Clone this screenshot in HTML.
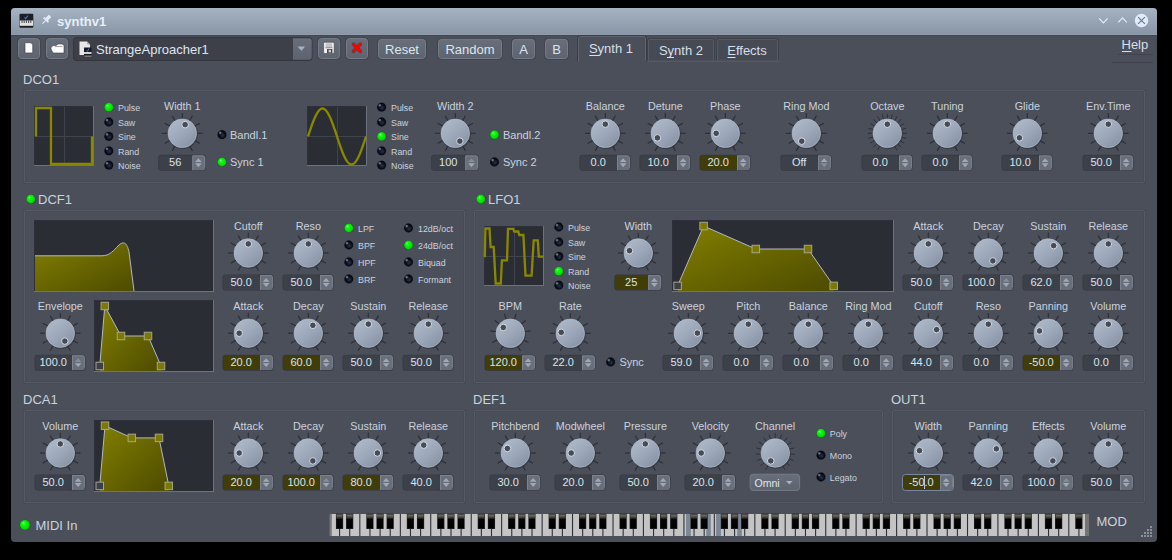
<!DOCTYPE html><html><head><meta charset="utf-8"><style>html,body{margin:0;padding:0;background:#000;width:1172px;height:560px;overflow:hidden}</style></head><body><svg width="1172" height="560" viewBox="0 0 1172 560" style="display:block"><defs>
<linearGradient id="kg" x1="0.15" y1="0.1" x2="0.85" y2="0.95"><stop offset="0" stop-color="#acb7c8"/><stop offset="0.5" stop-color="#9ca7b9"/><stop offset="1" stop-color="#8792a5"/></linearGradient>
<radialGradient id="lon" cx="0.5" cy="0.5" r="0.5" fx="0.32" fy="0.28"><stop offset="0" stop-color="#90ff90"/><stop offset="0.3" stop-color="#18fa18"/><stop offset="0.85" stop-color="#00e000"/><stop offset="1" stop-color="#00b800"/></radialGradient>
<radialGradient id="loff" cx="0.5" cy="0.5" r="0.5" fx="0.6" fy="0.62"><stop offset="0" stop-color="#23344f"/><stop offset="0.6" stop-color="#0c1220"/><stop offset="1" stop-color="#020306"/></radialGradient><radialGradient id="lhi" cx="0.5" cy="0.5" r="0.5"><stop offset="0" stop-color="#a0a4ac" stop-opacity="0.9"/><stop offset="1" stop-color="#a0a4ac" stop-opacity="0"/></radialGradient>
<linearGradient id="tb" x1="0" y1="0" x2="0" y2="1"><stop offset="0" stop-color="#a6b3c2"/><stop offset="1" stop-color="#8895a5"/></linearGradient>
<linearGradient id="bg" x1="0" y1="0" x2="0" y2="1"><stop offset="0" stop-color="#686e7a"/><stop offset="1" stop-color="#5d636f"/></linearGradient>
<linearGradient id="olv" x1="0" y1="0" x2="1" y2="1"><stop offset="0" stop-color="#827f00"/><stop offset="1" stop-color="#4d4b00"/></linearGradient>
<linearGradient id="bk" x1="0" y1="0" x2="0" y2="1"><stop offset="0" stop-color="#3a3a38"/><stop offset="0.1" stop-color="#6a665e"/><stop offset="0.22" stop-color="#4a4844"/><stop offset="0.38" stop-color="#050505"/><stop offset="1" stop-color="#000"/></linearGradient></defs><g font-family='"Liberation Sans", sans-serif'><rect width="1172" height="560" fill="#000"/><rect x="11" y="8" width="1146" height="534" rx="4" fill="#4b4f5a"/><path d="M11,35 V12 Q11,8 15,8 H1153 Q1157,8 1157,12 V35 Z" fill="url(#tb)"/><rect x="11" y="34" width="1146" height="1" fill="#919dad"/><rect x="11" y="35" width="1146" height="1" fill="#42464f"/><text x="57" y="26" font-size="13" text-anchor="start" fill="#e6eef8" font-weight="bold" >synthv1</text><rect x="19.5" y="13.7" width="13.8" height="14" rx="1" fill="#1e1f24"/><rect x="19.8" y="20.5" width="13.2" height="5.3" fill="#e2e2e2"/><path d="M22,20.5 V23 M24.2,20.5 V23 M26.4,20.5 V23 M28.6,20.5 V23 M30.8,20.5 V23" stroke="#333" stroke-width="0.9"/><path d="M24.5,17.4 L25.8,18.8 L27.8,15.6" stroke="#3f6dc0" stroke-width="1.2" fill="none"/><g transform="rotate(45 46 20)" fill="#e0ecfa"><rect x="44.3" y="14.2" width="3.4" height="5" rx="0.6"/><rect x="42.6" y="19" width="6.8" height="1.8" rx="0.5"/><rect x="45.5" y="20.5" width="1" height="4.6"/></g><path d="M1099.1,18.4 L1103.4,22.9 L1107.7,18.4" stroke="#e0ecfa" stroke-width="1.2" fill="none"/><path d="M1118.3,22.3 L1122.5,17.9 L1126.8,22.3" stroke="#e0ecfa" stroke-width="1.2" fill="none"/><circle cx="1141.5" cy="20.5" r="6.7" fill="#dfeafa"/><path d="M1138.1,17.1 L1144.9,23.9 M1144.9,17.1 L1138.1,23.9" stroke="#6b7889" stroke-width="1.1"/><rect x="17.5" y="37.5" width="23" height="22" rx="3.5" fill="#3a3d45"/><rect x="18.5" y="38.5" width="21" height="20" rx="3" fill="url(#bg)" stroke="#767c87" stroke-width="1"/><path d="M25,42.7 H31 L32.7,44.4 V52.9 H25 Z" fill="#ffffff" stroke="#3a3d45" stroke-width="0.6"/><path d="M30.6,42.8 L32.6,44.8" stroke="#777" stroke-width="0.8"/><rect x="45.5" y="37.5" width="23" height="22" rx="3.5" fill="#3a3d45"/><rect x="46.5" y="38.5" width="21" height="20" rx="3" fill="url(#bg)" stroke="#767c87" stroke-width="1"/><path d="M51,47.5 L53,45.6 H56 L58,44 H62 L64,45 V53 H53 L51,49 Z" fill="#ffffff" stroke="#3a3d45" stroke-width="0.6"/><path d="M55,46.6 H62.5" stroke="#888" stroke-width="0.8"/><rect x="73" y="37" width="239.5" height="24" rx="4" fill="#33363d"/><rect x="74" y="38" width="237.5" height="22" rx="3" fill="#3d4049"/><text x="96" y="54" font-size="13" text-anchor="start" fill="#dde6f0" font-weight="normal" >StrangeAproacher1</text><path d="M79.5,41.5 H87 L90,44.5 V55 H79.5 Z" fill="#e8e8e8"/><path d="M87,41.5 V44.5 H90" fill="#b0b0b0"/><rect x="84" y="47.5" width="7.5" height="8" fill="#1a1a1e"/><rect x="84" y="52" width="7.5" height="2" fill="#d0d0d0"/><rect x="84.5" y="55.5" width="7" height="1.5" fill="#777"/><path d="M86.5,50.5 L87.5,51.5 L89,48.5" stroke="#4a7ad0" stroke-width="0.9" fill="none"/><path d="M293,38.2 H309 Q311.7,38.2 311.7,41 V57 Q311.7,59.7 309,59.7 H293 Z" fill="url(#bg)"/><path d="M297.6,46.5 H305.2 L301.4,50.7 Z" fill="#a9b2c0"/><rect x="317.5" y="37.5" width="23" height="22" rx="3.5" fill="#3a3d45"/><rect x="318.5" y="38.5" width="21" height="20" rx="3" fill="url(#bg)" stroke="#767c87" stroke-width="1"/><rect x="323.6" y="42.2" width="10.6" height="11.3" rx="1.2" fill="#f4f4f4" stroke="#3a3d45" stroke-width="0.6"/><rect x="325.6" y="43.2" width="6.6" height="4.6" fill="#c4c4c4"/><path d="M325.3,47.8 H332.5" stroke="#555" stroke-width="0.6"/><rect x="327" y="49" width="5.4" height="4" fill="#4a4a4a"/><rect x="328.6" y="49.8" width="2.4" height="2.6" fill="#d0d0d0"/><rect x="345.5" y="37.5" width="23" height="22" rx="3.5" fill="#3a3d45"/><rect x="346.5" y="38.5" width="21" height="20" rx="3" fill="url(#bg)" stroke="#767c87" stroke-width="1"/><path d="M353.5,44.2 L360.3,51.3 M360.3,44.2 L353.5,51.3" stroke="#2a2020" stroke-width="3.6" stroke-linecap="round" opacity="0.5"/><path d="M353.5,44.2 L360.3,51.3 M360.3,44.2 L353.5,51.3" stroke="#ff0000" stroke-width="2.5" stroke-linecap="round"/><rect x="377.5" y="38.3" width="49" height="21.200000000000003" rx="3.5" fill="#3a3d45"/><rect x="378.5" y="39.3" width="47" height="19.200000000000003" rx="3" fill="url(#bg)" stroke="#767c87" stroke-width="1"/><text x="402.0" y="53.8" font-size="13" text-anchor="middle" fill="#dde6f0" font-weight="normal" >Reset</text><rect x="437.5" y="38.3" width="65" height="21.200000000000003" rx="3.5" fill="#3a3d45"/><rect x="438.5" y="39.3" width="63" height="19.200000000000003" rx="3" fill="url(#bg)" stroke="#767c87" stroke-width="1"/><text x="470.0" y="53.8" font-size="13" text-anchor="middle" fill="#dde6f0" font-weight="normal" >Random</text><rect x="511.5" y="38.3" width="24" height="21.200000000000003" rx="3.5" fill="#3a3d45"/><rect x="512.5" y="39.3" width="22" height="19.200000000000003" rx="3" fill="url(#bg)" stroke="#767c87" stroke-width="1"/><text x="523.5" y="53.8" font-size="13" text-anchor="middle" fill="#dde6f0" font-weight="normal" >A</text><rect x="544.5" y="38.3" width="24" height="21.200000000000003" rx="3.5" fill="#3a3d45"/><rect x="545.5" y="39.3" width="22" height="19.200000000000003" rx="3" fill="url(#bg)" stroke="#767c87" stroke-width="1"/><text x="556.5" y="53.8" font-size="13" text-anchor="middle" fill="#dde6f0" font-weight="normal" >B</text><rect x="646" y="60.5" width="133" height="1" fill="#5f6470"/><path d="M647.5,60.5 V40.5 Q647.5,38.5 649.5,38.5 H712.5 Q714.5,38.5 714.5,40.5 V60.5" fill="#464a54" stroke="#3d4049" stroke-width="1"/><path d="M648.5,60.5 V41 Q648.5,39.5 650,39.5 H712 Q713.5,39.5 713.5,41 V60.5" fill="none" stroke="#565a65" stroke-width="1"/><path d="M716.5,60.5 V40.5 Q716.5,38.5 718.5,38.5 H776.5 Q778.5,38.5 778.5,40.5 V60.5" fill="#464a54" stroke="#3d4049" stroke-width="1"/><path d="M717.5,60.5 V41 Q717.5,39.5 719,39.5 H776 Q777.5,39.5 777.5,41 V60.5" fill="none" stroke="#565a65" stroke-width="1"/><path d="M577.5,62 V38.5 Q577.5,35.5 580.5,35.5 H643.5 Q646.5,35.5 646.5,38.5 V62" fill="#4b4f5a" stroke="#3a3d46" stroke-width="1"/><path d="M578.5,62 V39 Q578.5,36.5 581,36.5 H643 Q645.5,36.5 645.5,39 V61" fill="none" stroke="#5e626d" stroke-width="1"/><text x="611" y="53" font-size="13" text-anchor="middle" fill="#d6dfea" font-weight="normal" >Synth 1</text><rect x="589.3" y="55" width="9" height="1" fill="#d6dfea"/><text x="681" y="54.5" font-size="13" text-anchor="middle" fill="#d6dfea" font-weight="normal" >Synth 2</text><rect x="667" y="57" width="7" height="1" fill="#d6dfea"/><text x="747" y="54.5" font-size="13" text-anchor="middle" fill="#d6dfea" font-weight="normal" >Effects</text><rect x="727.5" y="57" width="8" height="1" fill="#d6dfea"/><text x="1121.5" y="49" font-size="13" text-anchor="start" fill="#d6dfea" font-weight="normal" >Help</text><rect x="1122" y="51" width="9.5" height="1" fill="#d6dfea"/><rect x="1118" y="54" width="35" height="1" fill="#40434c"/><rect x="1112" y="62" width="41" height="1" fill="#40434c"/><text x="23" y="84" font-size="13" text-anchor="start" fill="#c9d2de" font-weight="normal" >DCO1</text><rect x="25.5" y="91.5" width="1118" height="90" fill="none" stroke="#474b55" stroke-width="1"/><rect x="23.5" y="89.5" width="1122" height="94" fill="none" stroke="#484c56" stroke-width="1"/><rect x="24.5" y="90.5" width="1120" height="92" fill="none" stroke="#565a65" stroke-width="1"/><rect x="24" y="90" width="1" height="1" fill="#474a54"/><rect x="1144" y="90" width="1" height="1" fill="#474a54"/><rect x="24" y="182" width="1" height="1" fill="#474a54"/><rect x="1144" y="182" width="1" height="1" fill="#474a54"/><circle cx="30.8" cy="199" r="4.9" fill="#3d4048" opacity="0.6"/><circle cx="30.8" cy="199" r="4.4" fill="url(#lon)"/><text x="38" y="204" font-size="13" text-anchor="start" fill="#c9d2de" font-weight="normal" >DCF1</text><rect x="25.5" y="211.5" width="438" height="170" fill="none" stroke="#474b55" stroke-width="1"/><rect x="23.5" y="209.5" width="442" height="174" fill="none" stroke="#484c56" stroke-width="1"/><rect x="24.5" y="210.5" width="440" height="172" fill="none" stroke="#565a65" stroke-width="1"/><rect x="24" y="210" width="1" height="1" fill="#474a54"/><rect x="464" y="210" width="1" height="1" fill="#474a54"/><rect x="24" y="382" width="1" height="1" fill="#474a54"/><rect x="464" y="382" width="1" height="1" fill="#474a54"/><circle cx="480.8" cy="199" r="4.9" fill="#3d4048" opacity="0.6"/><circle cx="480.8" cy="199" r="4.4" fill="url(#lon)"/><text x="488" y="204" font-size="13" text-anchor="start" fill="#c9d2de" font-weight="normal" >LFO1</text><rect x="475.5" y="211.5" width="668" height="170" fill="none" stroke="#474b55" stroke-width="1"/><rect x="473.5" y="209.5" width="672" height="174" fill="none" stroke="#484c56" stroke-width="1"/><rect x="474.5" y="210.5" width="670" height="172" fill="none" stroke="#565a65" stroke-width="1"/><rect x="474" y="210" width="1" height="1" fill="#474a54"/><rect x="1144" y="210" width="1" height="1" fill="#474a54"/><rect x="474" y="382" width="1" height="1" fill="#474a54"/><rect x="1144" y="382" width="1" height="1" fill="#474a54"/><text x="23" y="404" font-size="13" text-anchor="start" fill="#c9d2de" font-weight="normal" >DCA1</text><rect x="25.5" y="411.5" width="438" height="90" fill="none" stroke="#474b55" stroke-width="1"/><rect x="23.5" y="409.5" width="442" height="94" fill="none" stroke="#484c56" stroke-width="1"/><rect x="24.5" y="410.5" width="440" height="92" fill="none" stroke="#565a65" stroke-width="1"/><rect x="24" y="410" width="1" height="1" fill="#474a54"/><rect x="464" y="410" width="1" height="1" fill="#474a54"/><rect x="24" y="502" width="1" height="1" fill="#474a54"/><rect x="464" y="502" width="1" height="1" fill="#474a54"/><text x="473" y="404" font-size="13" text-anchor="start" fill="#c9d2de" font-weight="normal" >DEF1</text><rect x="475.5" y="411.5" width="406" height="90" fill="none" stroke="#474b55" stroke-width="1"/><rect x="473.5" y="409.5" width="410" height="94" fill="none" stroke="#484c56" stroke-width="1"/><rect x="474.5" y="410.5" width="408" height="92" fill="none" stroke="#565a65" stroke-width="1"/><rect x="474" y="410" width="1" height="1" fill="#474a54"/><rect x="882" y="410" width="1" height="1" fill="#474a54"/><rect x="474" y="502" width="1" height="1" fill="#474a54"/><rect x="882" y="502" width="1" height="1" fill="#474a54"/><text x="891" y="404" font-size="13" text-anchor="start" fill="#c9d2de" font-weight="normal" >OUT1</text><rect x="893.5" y="411.5" width="250" height="90" fill="none" stroke="#474b55" stroke-width="1"/><rect x="891.5" y="409.5" width="254" height="94" fill="none" stroke="#484c56" stroke-width="1"/><rect x="892.5" y="410.5" width="252" height="92" fill="none" stroke="#565a65" stroke-width="1"/><rect x="892" y="410" width="1" height="1" fill="#474a54"/><rect x="1144" y="410" width="1" height="1" fill="#474a54"/><rect x="892" y="502" width="1" height="1" fill="#474a54"/><rect x="1144" y="502" width="1" height="1" fill="#474a54"/><rect x="34" y="106" width="60" height="60" fill="#2b2d34"/><rect x="34" y="106" width="60" height="1" fill="#2d2f3a"/><rect x="34" y="106" width="1" height="60" fill="#2d2f3a"/><rect x="34" y="165" width="60" height="1" fill="#6c7281"/><rect x="93" y="106" width="1" height="60" fill="#6c7281"/><rect x="64" y="107" width="1" height="58" fill="#3f434d"/><rect x="35" y="136" width="58" height="1" fill="#3f434d"/><path d="M36,136.5 V108 H51 V164 H92 V136.5" fill="none" stroke="#8a8800" stroke-width="2.3"/><rect x="307" y="106" width="60" height="60" fill="#2b2d34"/><rect x="307" y="106" width="60" height="1" fill="#2d2f3a"/><rect x="307" y="106" width="1" height="60" fill="#2d2f3a"/><rect x="307" y="165" width="60" height="1" fill="#6c7281"/><rect x="366" y="106" width="1" height="60" fill="#6c7281"/><rect x="337" y="107" width="1" height="58" fill="#3f434d"/><rect x="308" y="136" width="58" height="1" fill="#3f434d"/><polyline points="308.0,136.50 308.5,134.98 309.0,133.47 309.5,131.97 310.0,130.48 310.5,129.01 311.0,127.56 311.5,126.14 312.0,124.74 312.5,123.38 313.0,122.06 313.5,120.79 314.0,119.56 314.5,118.37 315.0,117.24 315.5,116.17 316.0,115.16 316.5,114.21 317.0,113.32 317.5,112.51 318.0,111.76 318.5,111.09 319.0,110.49 319.5,109.97 320.0,109.52 320.5,109.15 321.0,108.87 321.5,108.66 322.0,108.54 322.5,108.50 323.0,108.54 323.5,108.66 324.0,108.87 324.5,109.15 325.0,109.52 325.5,109.97 326.0,110.49 326.5,111.09 327.0,111.76 327.5,112.51 328.0,113.32 328.5,114.21 329.0,115.16 329.5,116.17 330.0,117.24 330.5,118.37 331.0,119.56 331.5,120.79 332.0,122.06 332.5,123.38 333.0,124.74 333.5,126.14 334.0,127.56 334.5,129.01 335.0,130.48 335.5,131.97 336.0,133.47 336.5,134.98 337.0,136.50 337.5,138.02 338.0,139.53 338.5,141.03 339.0,142.52 339.5,143.99 340.0,145.44 340.5,146.86 341.0,148.26 341.5,149.62 342.0,150.94 342.5,152.21 343.0,153.44 343.5,154.63 344.0,155.76 344.5,156.83 345.0,157.84 345.5,158.79 346.0,159.68 346.5,160.49 347.0,161.24 347.5,161.91 348.0,162.51 348.5,163.03 349.0,163.48 349.5,163.85 350.0,164.13 350.5,164.34 351.0,164.46 351.5,164.50 352.0,164.46 352.5,164.34 353.0,164.13 353.5,163.85 354.0,163.48 354.5,163.03 355.0,162.51 355.5,161.91 356.0,161.24 356.5,160.49 357.0,159.68 357.5,158.79 358.0,157.84 358.5,156.83 359.0,155.76 359.5,154.63 360.0,153.44 360.5,152.21 361.0,150.94 361.5,149.62 362.0,148.26 362.5,146.86 363.0,145.44 363.5,143.99 364.0,142.52 364.5,141.03 365.0,139.53 365.5,138.02 366.0,136.50" fill="none" stroke="#8a8800" stroke-width="2.3"/><circle cx="108.8" cy="107.2" r="4.9" fill="#3d4048" opacity="0.6"/><circle cx="108.8" cy="107.2" r="4.4" fill="url(#lon)"/><text x="118" y="111.0" font-size="8.9" text-anchor="start" fill="#c9d2de" font-weight="normal" >Pulse</text><circle cx="381.6" cy="107.2" r="4.9" fill="#3d4048" opacity="0.6"/><circle cx="381.6" cy="107.2" r="4.4" fill="url(#loff)"/><circle cx="379.8" cy="105.3" r="1.9" fill="url(#lhi)"/><text x="391" y="111.0" font-size="8.9" text-anchor="start" fill="#c9d2de" font-weight="normal" >Pulse</text><circle cx="108.8" cy="122" r="4.9" fill="#3d4048" opacity="0.6"/><circle cx="108.8" cy="122" r="4.4" fill="url(#loff)"/><circle cx="107.0" cy="120.1" r="1.9" fill="url(#lhi)"/><text x="118" y="125.8" font-size="8.9" text-anchor="start" fill="#c9d2de" font-weight="normal" >Saw</text><circle cx="381.6" cy="122" r="4.9" fill="#3d4048" opacity="0.6"/><circle cx="381.6" cy="122" r="4.4" fill="url(#loff)"/><circle cx="379.8" cy="120.1" r="1.9" fill="url(#lhi)"/><text x="391" y="125.8" font-size="8.9" text-anchor="start" fill="#c9d2de" font-weight="normal" >Saw</text><circle cx="108.8" cy="136.3" r="4.9" fill="#3d4048" opacity="0.6"/><circle cx="108.8" cy="136.3" r="4.4" fill="url(#loff)"/><circle cx="107.0" cy="134.4" r="1.9" fill="url(#lhi)"/><text x="118" y="140.10000000000002" font-size="8.9" text-anchor="start" fill="#c9d2de" font-weight="normal" >Sine</text><circle cx="381.6" cy="136.3" r="4.9" fill="#3d4048" opacity="0.6"/><circle cx="381.6" cy="136.3" r="4.4" fill="url(#lon)"/><text x="391" y="140.10000000000002" font-size="8.9" text-anchor="start" fill="#c9d2de" font-weight="normal" >Sine</text><circle cx="108.8" cy="150.8" r="4.9" fill="#3d4048" opacity="0.6"/><circle cx="108.8" cy="150.8" r="4.4" fill="url(#loff)"/><circle cx="107.0" cy="148.9" r="1.9" fill="url(#lhi)"/><text x="118" y="154.60000000000002" font-size="8.9" text-anchor="start" fill="#c9d2de" font-weight="normal" >Rand</text><circle cx="381.6" cy="150.8" r="4.9" fill="#3d4048" opacity="0.6"/><circle cx="381.6" cy="150.8" r="4.4" fill="url(#loff)"/><circle cx="379.8" cy="148.9" r="1.9" fill="url(#lhi)"/><text x="391" y="154.60000000000002" font-size="8.9" text-anchor="start" fill="#c9d2de" font-weight="normal" >Rand</text><circle cx="108.8" cy="165.1" r="4.9" fill="#3d4048" opacity="0.6"/><circle cx="108.8" cy="165.1" r="4.4" fill="url(#loff)"/><circle cx="107.0" cy="163.2" r="1.9" fill="url(#lhi)"/><text x="118" y="168.9" font-size="8.9" text-anchor="start" fill="#c9d2de" font-weight="normal" >Noise</text><circle cx="381.6" cy="165.1" r="4.9" fill="#3d4048" opacity="0.6"/><circle cx="381.6" cy="165.1" r="4.4" fill="url(#loff)"/><circle cx="379.8" cy="163.2" r="1.9" fill="url(#lhi)"/><text x="391" y="168.9" font-size="8.9" text-anchor="start" fill="#c9d2de" font-weight="normal" >Noise</text><text x="182.3" y="109.80000000000001" font-size="10.8" text-anchor="middle" fill="#c9d2de" font-weight="normal" >Width 1</text><line x1="175.80" y1="144.56" x2="172.15" y2="150.88" stroke="#2b2e35" stroke-width="1.15"/><line x1="171.04" y1="139.80" x2="164.72" y2="143.45" stroke="#2b2e35" stroke-width="1.15"/><line x1="169.30" y1="133.30" x2="162.00" y2="133.30" stroke="#2b2e35" stroke-width="1.15"/><line x1="171.04" y1="126.80" x2="164.72" y2="123.15" stroke="#2b2e35" stroke-width="1.15"/><line x1="175.80" y1="122.04" x2="172.15" y2="115.72" stroke="#2b2e35" stroke-width="1.15"/><line x1="182.30" y1="120.30" x2="182.30" y2="113.00" stroke="#2b2e35" stroke-width="1.15"/><line x1="188.80" y1="122.04" x2="192.45" y2="115.72" stroke="#2b2e35" stroke-width="1.15"/><line x1="193.56" y1="126.80" x2="199.88" y2="123.15" stroke="#2b2e35" stroke-width="1.15"/><line x1="195.30" y1="133.30" x2="202.60" y2="133.30" stroke="#2b2e35" stroke-width="1.15"/><line x1="193.56" y1="139.80" x2="199.88" y2="143.45" stroke="#2b2e35" stroke-width="1.15"/><line x1="188.80" y1="144.56" x2="192.45" y2="150.88" stroke="#2b2e35" stroke-width="1.15"/><circle cx="183.10000000000002" cy="134.3" r="14.85" fill="#353840" opacity="0.8"/><circle cx="182.3" cy="133.3" r="14.25" fill="url(#kg)" stroke="#b2bccb" stroke-width="0.7"/><circle cx="185.11" cy="124.65" r="3.3" fill="#474b55" stroke="#d5dce6" stroke-width="1.0"/><rect x="158.2" y="154.8" width="47.60000000000002" height="16.0" rx="3" fill="#363941"/><rect x="158.79999999999998" y="155.4" width="33.50000000000002" height="14.8" rx="2.5" fill="#3c4049"/><path d="M192.3,155.4 H202.70000000000002 Q205.20000000000002,155.4 205.20000000000002,157.9 V167.70000000000002 Q205.20000000000002,170.20000000000002 202.70000000000002,170.20000000000002 H192.3 Z" fill="#686e7a"/><path d="M192.8,170.20000000000002 V155.9 H202.70000000000002 Q204.70000000000002,155.9 204.70000000000002,157.9 V167.70000000000002" fill="none" stroke="#7c828e" stroke-width="1"/><path d="M195.05,162.10000000000002 L201.85000000000002,162.10000000000002 L198.45000000000002,158.3 Z" fill="#a0a8b5"/><path d="M195.05,163.3 L201.85000000000002,163.3 L198.45000000000002,167.20000000000002 Z" fill="#a0a8b5"/><text x="175.2" y="166.2" font-size="11" text-anchor="middle" fill="#dbe3ee" font-weight="normal" >56</text><circle cx="222" cy="134.7" r="4.9" fill="#3d4048" opacity="0.6"/><circle cx="222" cy="134.7" r="4.4" fill="url(#loff)"/><circle cx="220.2" cy="132.79999999999998" r="1.9" fill="url(#lhi)"/><text x="230" y="138.7" font-size="11" text-anchor="start" fill="#c9d2de" font-weight="normal" >Bandl.1</text><circle cx="222" cy="162" r="4.9" fill="#3d4048" opacity="0.6"/><circle cx="222" cy="162" r="4.4" fill="url(#lon)"/><text x="230" y="166" font-size="11" text-anchor="start" fill="#c9d2de" font-weight="normal" >Sync 1</text><text x="455.3" y="109.80000000000001" font-size="10.8" text-anchor="middle" fill="#c9d2de" font-weight="normal" >Width 2</text><line x1="448.80" y1="144.56" x2="445.15" y2="150.88" stroke="#2b2e35" stroke-width="1.15"/><line x1="444.04" y1="139.80" x2="437.72" y2="143.45" stroke="#2b2e35" stroke-width="1.15"/><line x1="442.30" y1="133.30" x2="435.00" y2="133.30" stroke="#2b2e35" stroke-width="1.15"/><line x1="444.04" y1="126.80" x2="437.72" y2="123.15" stroke="#2b2e35" stroke-width="1.15"/><line x1="448.80" y1="122.04" x2="445.15" y2="115.72" stroke="#2b2e35" stroke-width="1.15"/><line x1="455.30" y1="120.30" x2="455.30" y2="113.00" stroke="#2b2e35" stroke-width="1.15"/><line x1="461.80" y1="122.04" x2="465.45" y2="115.72" stroke="#2b2e35" stroke-width="1.15"/><line x1="466.56" y1="126.80" x2="472.88" y2="123.15" stroke="#2b2e35" stroke-width="1.15"/><line x1="468.30" y1="133.30" x2="475.60" y2="133.30" stroke="#2b2e35" stroke-width="1.15"/><line x1="466.56" y1="139.80" x2="472.88" y2="143.45" stroke="#2b2e35" stroke-width="1.15"/><line x1="461.80" y1="144.56" x2="465.45" y2="150.88" stroke="#2b2e35" stroke-width="1.15"/><circle cx="456.1" cy="134.3" r="14.85" fill="#353840" opacity="0.8"/><circle cx="455.3" cy="133.3" r="14.25" fill="url(#kg)" stroke="#b2bccb" stroke-width="0.7"/><circle cx="459.85" cy="141.18" r="3.3" fill="#474b55" stroke="#d5dce6" stroke-width="1.0"/><rect x="431.2" y="154.8" width="47.60000000000002" height="16.0" rx="3" fill="#363941"/><rect x="431.8" y="155.4" width="33.50000000000002" height="14.8" rx="2.5" fill="#3c4049"/><path d="M465.3,155.4 H475.7 Q478.2,155.4 478.2,157.9 V167.70000000000002 Q478.2,170.20000000000002 475.7,170.20000000000002 H465.3 Z" fill="#686e7a"/><path d="M465.8,170.20000000000002 V155.9 H475.7 Q477.7,155.9 477.7,157.9 V167.70000000000002" fill="none" stroke="#7c828e" stroke-width="1"/><path d="M468.05,162.10000000000002 L474.84999999999997,162.10000000000002 L471.45,158.3 Z" fill="#868c98"/><path d="M468.05,163.3 L474.84999999999997,163.3 L471.45,167.20000000000002 Z" fill="#a0a8b5"/><text x="448.2" y="166.2" font-size="11" text-anchor="middle" fill="#dbe3ee" font-weight="normal" >100</text><circle cx="494.5" cy="134.7" r="4.9" fill="#3d4048" opacity="0.6"/><circle cx="494.5" cy="134.7" r="4.4" fill="url(#lon)"/><text x="503" y="138.7" font-size="11" text-anchor="start" fill="#c9d2de" font-weight="normal" >Bandl.2</text><circle cx="494.5" cy="162" r="4.9" fill="#3d4048" opacity="0.6"/><circle cx="494.5" cy="162" r="4.4" fill="url(#loff)"/><circle cx="492.7" cy="160.1" r="1.9" fill="url(#lhi)"/><text x="503" y="166" font-size="11" text-anchor="start" fill="#c9d2de" font-weight="normal" >Sync 2</text><text x="605.3" y="109.80000000000001" font-size="10.8" text-anchor="middle" fill="#c9d2de" font-weight="normal" >Balance</text><line x1="598.80" y1="144.56" x2="595.15" y2="150.88" stroke="#2b2e35" stroke-width="1.15"/><line x1="594.04" y1="139.80" x2="587.72" y2="143.45" stroke="#2b2e35" stroke-width="1.15"/><line x1="592.30" y1="133.30" x2="585.00" y2="133.30" stroke="#2b2e35" stroke-width="1.15"/><line x1="594.04" y1="126.80" x2="587.72" y2="123.15" stroke="#2b2e35" stroke-width="1.15"/><line x1="598.80" y1="122.04" x2="595.15" y2="115.72" stroke="#2b2e35" stroke-width="1.15"/><line x1="605.30" y1="120.30" x2="605.30" y2="113.00" stroke="#2b2e35" stroke-width="1.15"/><line x1="611.80" y1="122.04" x2="615.45" y2="115.72" stroke="#2b2e35" stroke-width="1.15"/><line x1="616.56" y1="126.80" x2="622.88" y2="123.15" stroke="#2b2e35" stroke-width="1.15"/><line x1="618.30" y1="133.30" x2="625.60" y2="133.30" stroke="#2b2e35" stroke-width="1.15"/><line x1="616.56" y1="139.80" x2="622.88" y2="143.45" stroke="#2b2e35" stroke-width="1.15"/><line x1="611.80" y1="144.56" x2="615.45" y2="150.88" stroke="#2b2e35" stroke-width="1.15"/><circle cx="606.0999999999999" cy="134.3" r="14.85" fill="#353840" opacity="0.8"/><circle cx="605.3" cy="133.3" r="14.25" fill="url(#kg)" stroke="#b2bccb" stroke-width="0.7"/><circle cx="605.30" cy="124.20" r="3.3" fill="#474b55" stroke="#d5dce6" stroke-width="1.0"/><rect x="579.5" y="154.8" width="51.0" height="16.0" rx="3" fill="#363941"/><rect x="580.1" y="155.4" width="36.9" height="14.8" rx="2.5" fill="#3c4049"/><path d="M617.0,155.4 H627.4 Q629.9,155.4 629.9,157.9 V167.70000000000002 Q629.9,170.20000000000002 627.4,170.20000000000002 H617.0 Z" fill="#686e7a"/><path d="M617.5,170.20000000000002 V155.9 H627.4 Q629.4,155.9 629.4,157.9 V167.70000000000002" fill="none" stroke="#7c828e" stroke-width="1"/><path d="M619.75,162.10000000000002 L626.55,162.10000000000002 L623.15,158.3 Z" fill="#a0a8b5"/><path d="M619.75,163.3 L626.55,163.3 L623.15,167.20000000000002 Z" fill="#a0a8b5"/><text x="598.2" y="166.2" font-size="11" text-anchor="middle" fill="#dbe3ee" font-weight="normal" >0.0</text><text x="665.3" y="109.80000000000001" font-size="10.8" text-anchor="middle" fill="#c9d2de" font-weight="normal" >Detune</text><line x1="658.80" y1="144.56" x2="655.15" y2="150.88" stroke="#2b2e35" stroke-width="1.15"/><line x1="654.04" y1="139.80" x2="647.72" y2="143.45" stroke="#2b2e35" stroke-width="1.15"/><line x1="652.30" y1="133.30" x2="645.00" y2="133.30" stroke="#2b2e35" stroke-width="1.15"/><line x1="654.04" y1="126.80" x2="647.72" y2="123.15" stroke="#2b2e35" stroke-width="1.15"/><line x1="658.80" y1="122.04" x2="655.15" y2="115.72" stroke="#2b2e35" stroke-width="1.15"/><line x1="665.30" y1="120.30" x2="665.30" y2="113.00" stroke="#2b2e35" stroke-width="1.15"/><line x1="671.80" y1="122.04" x2="675.45" y2="115.72" stroke="#2b2e35" stroke-width="1.15"/><line x1="676.56" y1="126.80" x2="682.88" y2="123.15" stroke="#2b2e35" stroke-width="1.15"/><line x1="678.30" y1="133.30" x2="685.60" y2="133.30" stroke="#2b2e35" stroke-width="1.15"/><line x1="676.56" y1="139.80" x2="682.88" y2="143.45" stroke="#2b2e35" stroke-width="1.15"/><line x1="671.80" y1="144.56" x2="675.45" y2="150.88" stroke="#2b2e35" stroke-width="1.15"/><circle cx="666.0999999999999" cy="134.3" r="14.85" fill="#353840" opacity="0.8"/><circle cx="665.3" cy="133.3" r="14.25" fill="url(#kg)" stroke="#b2bccb" stroke-width="0.7"/><circle cx="657.42" cy="137.85" r="3.3" fill="#474b55" stroke="#d5dce6" stroke-width="1.0"/><rect x="639.5" y="154.8" width="51.0" height="16.0" rx="3" fill="#363941"/><rect x="640.1" y="155.4" width="36.9" height="14.8" rx="2.5" fill="#3c4049"/><path d="M677.0,155.4 H687.4 Q689.9,155.4 689.9,157.9 V167.70000000000002 Q689.9,170.20000000000002 687.4,170.20000000000002 H677.0 Z" fill="#686e7a"/><path d="M677.5,170.20000000000002 V155.9 H687.4 Q689.4,155.9 689.4,157.9 V167.70000000000002" fill="none" stroke="#7c828e" stroke-width="1"/><path d="M679.75,162.10000000000002 L686.55,162.10000000000002 L683.15,158.3 Z" fill="#a0a8b5"/><path d="M679.75,163.3 L686.55,163.3 L683.15,167.20000000000002 Z" fill="#a0a8b5"/><text x="658.2" y="166.2" font-size="11" text-anchor="middle" fill="#dbe3ee" font-weight="normal" >10.0</text><text x="725.3" y="109.80000000000001" font-size="10.8" text-anchor="middle" fill="#c9d2de" font-weight="normal" >Phase</text><line x1="718.80" y1="144.56" x2="715.15" y2="150.88" stroke="#2b2e35" stroke-width="1.15"/><line x1="714.04" y1="139.80" x2="707.72" y2="143.45" stroke="#2b2e35" stroke-width="1.15"/><line x1="712.30" y1="133.30" x2="705.00" y2="133.30" stroke="#2b2e35" stroke-width="1.15"/><line x1="714.04" y1="126.80" x2="707.72" y2="123.15" stroke="#2b2e35" stroke-width="1.15"/><line x1="718.80" y1="122.04" x2="715.15" y2="115.72" stroke="#2b2e35" stroke-width="1.15"/><line x1="725.30" y1="120.30" x2="725.30" y2="113.00" stroke="#2b2e35" stroke-width="1.15"/><line x1="731.80" y1="122.04" x2="735.45" y2="115.72" stroke="#2b2e35" stroke-width="1.15"/><line x1="736.56" y1="126.80" x2="742.88" y2="123.15" stroke="#2b2e35" stroke-width="1.15"/><line x1="738.30" y1="133.30" x2="745.60" y2="133.30" stroke="#2b2e35" stroke-width="1.15"/><line x1="736.56" y1="139.80" x2="742.88" y2="143.45" stroke="#2b2e35" stroke-width="1.15"/><line x1="731.80" y1="144.56" x2="735.45" y2="150.88" stroke="#2b2e35" stroke-width="1.15"/><circle cx="726.0999999999999" cy="134.3" r="14.85" fill="#353840" opacity="0.8"/><circle cx="725.3" cy="133.3" r="14.25" fill="url(#kg)" stroke="#b2bccb" stroke-width="0.7"/><circle cx="716.20" cy="133.30" r="3.3" fill="#474b55" stroke="#d5dce6" stroke-width="1.0"/><rect x="699.5" y="154.8" width="51.0" height="16.0" rx="3" fill="#363941"/><rect x="700.1" y="155.4" width="36.9" height="14.8" rx="2.5" fill="#403d08"/><path d="M737.0,155.4 H747.4 Q749.9,155.4 749.9,157.9 V167.70000000000002 Q749.9,170.20000000000002 747.4,170.20000000000002 H737.0 Z" fill="#686e7a"/><path d="M737.5,170.20000000000002 V155.9 H747.4 Q749.4,155.9 749.4,157.9 V167.70000000000002" fill="none" stroke="#7c828e" stroke-width="1"/><path d="M739.75,162.10000000000002 L746.55,162.10000000000002 L743.15,158.3 Z" fill="#a0a8b5"/><path d="M739.75,163.3 L746.55,163.3 L743.15,167.20000000000002 Z" fill="#a0a8b5"/><text x="718.2" y="166.2" font-size="11" text-anchor="middle" fill="#dbe3ee" font-weight="normal" >20.0</text><text x="806.3" y="109.80000000000001" font-size="10.8" text-anchor="middle" fill="#c9d2de" font-weight="normal" >Ring Mod</text><line x1="799.80" y1="144.56" x2="796.15" y2="150.88" stroke="#2b2e35" stroke-width="1.15"/><line x1="795.04" y1="139.80" x2="788.72" y2="143.45" stroke="#2b2e35" stroke-width="1.15"/><line x1="793.30" y1="133.30" x2="786.00" y2="133.30" stroke="#2b2e35" stroke-width="1.15"/><line x1="795.04" y1="126.80" x2="788.72" y2="123.15" stroke="#2b2e35" stroke-width="1.15"/><line x1="799.80" y1="122.04" x2="796.15" y2="115.72" stroke="#2b2e35" stroke-width="1.15"/><line x1="806.30" y1="120.30" x2="806.30" y2="113.00" stroke="#2b2e35" stroke-width="1.15"/><line x1="812.80" y1="122.04" x2="816.45" y2="115.72" stroke="#2b2e35" stroke-width="1.15"/><line x1="817.56" y1="126.80" x2="823.88" y2="123.15" stroke="#2b2e35" stroke-width="1.15"/><line x1="819.30" y1="133.30" x2="826.60" y2="133.30" stroke="#2b2e35" stroke-width="1.15"/><line x1="817.56" y1="139.80" x2="823.88" y2="143.45" stroke="#2b2e35" stroke-width="1.15"/><line x1="812.80" y1="144.56" x2="816.45" y2="150.88" stroke="#2b2e35" stroke-width="1.15"/><circle cx="807.0999999999999" cy="134.3" r="14.85" fill="#353840" opacity="0.8"/><circle cx="806.3" cy="133.3" r="14.25" fill="url(#kg)" stroke="#b2bccb" stroke-width="0.7"/><circle cx="801.75" cy="141.18" r="3.3" fill="#474b55" stroke="#d5dce6" stroke-width="1.0"/><rect x="780.5" y="154.8" width="51.0" height="16.0" rx="3" fill="#363941"/><rect x="781.1" y="155.4" width="36.9" height="14.8" rx="2.5" fill="#3c4049"/><path d="M818.0,155.4 H828.4 Q830.9,155.4 830.9,157.9 V167.70000000000002 Q830.9,170.20000000000002 828.4,170.20000000000002 H818.0 Z" fill="#686e7a"/><path d="M818.5,170.20000000000002 V155.9 H828.4 Q830.4,155.9 830.4,157.9 V167.70000000000002" fill="none" stroke="#7c828e" stroke-width="1"/><path d="M820.75,162.10000000000002 L827.55,162.10000000000002 L824.15,158.3 Z" fill="#a0a8b5"/><path d="M820.75,163.3 L827.55,163.3 L824.15,167.20000000000002 Z" fill="#868c98"/><text x="799.2" y="166.2" font-size="11" text-anchor="middle" fill="#dbe3ee" font-weight="normal" >Off</text><text x="887.3" y="109.80000000000001" font-size="10.8" text-anchor="middle" fill="#c9d2de" font-weight="normal" >Octave</text><line x1="880.80" y1="144.56" x2="877.50" y2="150.27" stroke="#2b2e35" stroke-width="0.95"/><line x1="878.11" y1="142.49" x2="873.44" y2="147.16" stroke="#2b2e35" stroke-width="0.95"/><line x1="876.04" y1="139.80" x2="870.33" y2="143.10" stroke="#2b2e35" stroke-width="0.95"/><line x1="874.74" y1="136.66" x2="868.37" y2="138.37" stroke="#2b2e35" stroke-width="0.95"/><line x1="874.30" y1="133.30" x2="867.70" y2="133.30" stroke="#2b2e35" stroke-width="0.95"/><line x1="874.74" y1="129.94" x2="868.37" y2="128.23" stroke="#2b2e35" stroke-width="0.95"/><line x1="876.04" y1="126.80" x2="870.33" y2="123.50" stroke="#2b2e35" stroke-width="0.95"/><line x1="878.11" y1="124.11" x2="873.44" y2="119.44" stroke="#2b2e35" stroke-width="0.95"/><line x1="880.80" y1="122.04" x2="877.50" y2="116.33" stroke="#2b2e35" stroke-width="0.95"/><line x1="883.94" y1="120.74" x2="882.23" y2="114.37" stroke="#2b2e35" stroke-width="0.95"/><line x1="887.30" y1="120.30" x2="887.30" y2="113.70" stroke="#2b2e35" stroke-width="0.95"/><line x1="890.66" y1="120.74" x2="892.37" y2="114.37" stroke="#2b2e35" stroke-width="0.95"/><line x1="893.80" y1="122.04" x2="897.10" y2="116.33" stroke="#2b2e35" stroke-width="0.95"/><line x1="896.49" y1="124.11" x2="901.16" y2="119.44" stroke="#2b2e35" stroke-width="0.95"/><line x1="898.56" y1="126.80" x2="904.27" y2="123.50" stroke="#2b2e35" stroke-width="0.95"/><line x1="899.86" y1="129.94" x2="906.23" y2="128.23" stroke="#2b2e35" stroke-width="0.95"/><line x1="900.30" y1="133.30" x2="906.90" y2="133.30" stroke="#2b2e35" stroke-width="0.95"/><line x1="899.86" y1="136.66" x2="906.23" y2="138.37" stroke="#2b2e35" stroke-width="0.95"/><line x1="898.56" y1="139.80" x2="904.27" y2="143.10" stroke="#2b2e35" stroke-width="0.95"/><line x1="896.49" y1="142.49" x2="901.16" y2="147.16" stroke="#2b2e35" stroke-width="0.95"/><line x1="893.80" y1="144.56" x2="897.10" y2="150.27" stroke="#2b2e35" stroke-width="0.95"/><circle cx="888.0999999999999" cy="134.3" r="14.85" fill="#353840" opacity="0.8"/><circle cx="887.3" cy="133.3" r="14.25" fill="url(#kg)" stroke="#b2bccb" stroke-width="0.7"/><circle cx="887.30" cy="124.20" r="3.3" fill="#474b55" stroke="#d5dce6" stroke-width="1.0"/><rect x="861.5" y="154.8" width="51.0" height="16.0" rx="3" fill="#363941"/><rect x="862.1" y="155.4" width="36.9" height="14.8" rx="2.5" fill="#3c4049"/><path d="M899.0,155.4 H909.4 Q911.9,155.4 911.9,157.9 V167.70000000000002 Q911.9,170.20000000000002 909.4,170.20000000000002 H899.0 Z" fill="#686e7a"/><path d="M899.5,170.20000000000002 V155.9 H909.4 Q911.4,155.9 911.4,157.9 V167.70000000000002" fill="none" stroke="#7c828e" stroke-width="1"/><path d="M901.75,162.10000000000002 L908.55,162.10000000000002 L905.15,158.3 Z" fill="#a0a8b5"/><path d="M901.75,163.3 L908.55,163.3 L905.15,167.20000000000002 Z" fill="#a0a8b5"/><text x="880.2" y="166.2" font-size="11" text-anchor="middle" fill="#dbe3ee" font-weight="normal" >0.0</text><text x="947.3" y="109.80000000000001" font-size="10.8" text-anchor="middle" fill="#c9d2de" font-weight="normal" >Tuning</text><line x1="940.80" y1="144.56" x2="937.15" y2="150.88" stroke="#2b2e35" stroke-width="1.15"/><line x1="936.04" y1="139.80" x2="929.72" y2="143.45" stroke="#2b2e35" stroke-width="1.15"/><line x1="934.30" y1="133.30" x2="927.00" y2="133.30" stroke="#2b2e35" stroke-width="1.15"/><line x1="936.04" y1="126.80" x2="929.72" y2="123.15" stroke="#2b2e35" stroke-width="1.15"/><line x1="940.80" y1="122.04" x2="937.15" y2="115.72" stroke="#2b2e35" stroke-width="1.15"/><line x1="947.30" y1="120.30" x2="947.30" y2="113.00" stroke="#2b2e35" stroke-width="1.15"/><line x1="953.80" y1="122.04" x2="957.45" y2="115.72" stroke="#2b2e35" stroke-width="1.15"/><line x1="958.56" y1="126.80" x2="964.88" y2="123.15" stroke="#2b2e35" stroke-width="1.15"/><line x1="960.30" y1="133.30" x2="967.60" y2="133.30" stroke="#2b2e35" stroke-width="1.15"/><line x1="958.56" y1="139.80" x2="964.88" y2="143.45" stroke="#2b2e35" stroke-width="1.15"/><line x1="953.80" y1="144.56" x2="957.45" y2="150.88" stroke="#2b2e35" stroke-width="1.15"/><circle cx="948.0999999999999" cy="134.3" r="14.85" fill="#353840" opacity="0.8"/><circle cx="947.3" cy="133.3" r="14.25" fill="url(#kg)" stroke="#b2bccb" stroke-width="0.7"/><circle cx="947.30" cy="124.20" r="3.3" fill="#474b55" stroke="#d5dce6" stroke-width="1.0"/><rect x="921.5" y="154.8" width="51.0" height="16.0" rx="3" fill="#363941"/><rect x="922.1" y="155.4" width="36.9" height="14.8" rx="2.5" fill="#3c4049"/><path d="M959.0,155.4 H969.4 Q971.9,155.4 971.9,157.9 V167.70000000000002 Q971.9,170.20000000000002 969.4,170.20000000000002 H959.0 Z" fill="#686e7a"/><path d="M959.5,170.20000000000002 V155.9 H969.4 Q971.4,155.9 971.4,157.9 V167.70000000000002" fill="none" stroke="#7c828e" stroke-width="1"/><path d="M961.75,162.10000000000002 L968.55,162.10000000000002 L965.15,158.3 Z" fill="#a0a8b5"/><path d="M961.75,163.3 L968.55,163.3 L965.15,167.20000000000002 Z" fill="#a0a8b5"/><text x="940.2" y="166.2" font-size="11" text-anchor="middle" fill="#dbe3ee" font-weight="normal" >0.0</text><text x="1027.3" y="109.80000000000001" font-size="10.8" text-anchor="middle" fill="#c9d2de" font-weight="normal" >Glide</text><line x1="1020.80" y1="144.56" x2="1017.15" y2="150.88" stroke="#2b2e35" stroke-width="1.15"/><line x1="1016.04" y1="139.80" x2="1009.72" y2="143.45" stroke="#2b2e35" stroke-width="1.15"/><line x1="1014.30" y1="133.30" x2="1007.00" y2="133.30" stroke="#2b2e35" stroke-width="1.15"/><line x1="1016.04" y1="126.80" x2="1009.72" y2="123.15" stroke="#2b2e35" stroke-width="1.15"/><line x1="1020.80" y1="122.04" x2="1017.15" y2="115.72" stroke="#2b2e35" stroke-width="1.15"/><line x1="1027.30" y1="120.30" x2="1027.30" y2="113.00" stroke="#2b2e35" stroke-width="1.15"/><line x1="1033.80" y1="122.04" x2="1037.45" y2="115.72" stroke="#2b2e35" stroke-width="1.15"/><line x1="1038.56" y1="126.80" x2="1044.88" y2="123.15" stroke="#2b2e35" stroke-width="1.15"/><line x1="1040.30" y1="133.30" x2="1047.60" y2="133.30" stroke="#2b2e35" stroke-width="1.15"/><line x1="1038.56" y1="139.80" x2="1044.88" y2="143.45" stroke="#2b2e35" stroke-width="1.15"/><line x1="1033.80" y1="144.56" x2="1037.45" y2="150.88" stroke="#2b2e35" stroke-width="1.15"/><circle cx="1028.1" cy="134.3" r="14.85" fill="#353840" opacity="0.8"/><circle cx="1027.3" cy="133.3" r="14.25" fill="url(#kg)" stroke="#b2bccb" stroke-width="0.7"/><circle cx="1019.42" cy="137.85" r="3.3" fill="#474b55" stroke="#d5dce6" stroke-width="1.0"/><rect x="1001.5" y="154.8" width="51.0" height="16.0" rx="3" fill="#363941"/><rect x="1002.1" y="155.4" width="36.9" height="14.8" rx="2.5" fill="#3c4049"/><path d="M1039.0,155.4 H1049.4 Q1051.9,155.4 1051.9,157.9 V167.70000000000002 Q1051.9,170.20000000000002 1049.4,170.20000000000002 H1039.0 Z" fill="#686e7a"/><path d="M1039.5,170.20000000000002 V155.9 H1049.4 Q1051.4,155.9 1051.4,157.9 V167.70000000000002" fill="none" stroke="#7c828e" stroke-width="1"/><path d="M1041.75,162.10000000000002 L1048.5500000000002,162.10000000000002 L1045.15,158.3 Z" fill="#a0a8b5"/><path d="M1041.75,163.3 L1048.5500000000002,163.3 L1045.15,167.20000000000002 Z" fill="#a0a8b5"/><text x="1020.2" y="166.2" font-size="11" text-anchor="middle" fill="#dbe3ee" font-weight="normal" >10.0</text><text x="1108.3" y="109.80000000000001" font-size="10.8" text-anchor="middle" fill="#c9d2de" font-weight="normal" >Env.Time</text><line x1="1101.80" y1="144.56" x2="1098.15" y2="150.88" stroke="#2b2e35" stroke-width="1.15"/><line x1="1097.04" y1="139.80" x2="1090.72" y2="143.45" stroke="#2b2e35" stroke-width="1.15"/><line x1="1095.30" y1="133.30" x2="1088.00" y2="133.30" stroke="#2b2e35" stroke-width="1.15"/><line x1="1097.04" y1="126.80" x2="1090.72" y2="123.15" stroke="#2b2e35" stroke-width="1.15"/><line x1="1101.80" y1="122.04" x2="1098.15" y2="115.72" stroke="#2b2e35" stroke-width="1.15"/><line x1="1108.30" y1="120.30" x2="1108.30" y2="113.00" stroke="#2b2e35" stroke-width="1.15"/><line x1="1114.80" y1="122.04" x2="1118.45" y2="115.72" stroke="#2b2e35" stroke-width="1.15"/><line x1="1119.56" y1="126.80" x2="1125.88" y2="123.15" stroke="#2b2e35" stroke-width="1.15"/><line x1="1121.30" y1="133.30" x2="1128.60" y2="133.30" stroke="#2b2e35" stroke-width="1.15"/><line x1="1119.56" y1="139.80" x2="1125.88" y2="143.45" stroke="#2b2e35" stroke-width="1.15"/><line x1="1114.80" y1="144.56" x2="1118.45" y2="150.88" stroke="#2b2e35" stroke-width="1.15"/><circle cx="1109.1" cy="134.3" r="14.85" fill="#353840" opacity="0.8"/><circle cx="1108.3" cy="133.3" r="14.25" fill="url(#kg)" stroke="#b2bccb" stroke-width="0.7"/><circle cx="1108.30" cy="124.20" r="3.3" fill="#474b55" stroke="#d5dce6" stroke-width="1.0"/><rect x="1082.5" y="154.8" width="51.0" height="16.0" rx="3" fill="#363941"/><rect x="1083.1" y="155.4" width="36.9" height="14.8" rx="2.5" fill="#3c4049"/><path d="M1120.0,155.4 H1130.4 Q1132.9,155.4 1132.9,157.9 V167.70000000000002 Q1132.9,170.20000000000002 1130.4,170.20000000000002 H1120.0 Z" fill="#686e7a"/><path d="M1120.5,170.20000000000002 V155.9 H1130.4 Q1132.4,155.9 1132.4,157.9 V167.70000000000002" fill="none" stroke="#7c828e" stroke-width="1"/><path d="M1122.75,162.10000000000002 L1129.5500000000002,162.10000000000002 L1126.15,158.3 Z" fill="#a0a8b5"/><path d="M1122.75,163.3 L1129.5500000000002,163.3 L1126.15,167.20000000000002 Z" fill="#a0a8b5"/><text x="1101.2" y="166.2" font-size="11" text-anchor="middle" fill="#dbe3ee" font-weight="normal" >50.0</text><rect x="34" y="220" width="180" height="72" fill="#2b2d34"/><rect x="34" y="220" width="180" height="1" fill="#2d2f3a"/><rect x="34" y="220" width="1" height="72" fill="#2d2f3a"/><rect x="34" y="291" width="180" height="1" fill="#6c7281"/><rect x="213" y="220" width="1" height="72" fill="#6c7281"/><path d="M35,291 V255.8 H102 C110,255.8 114,250 118,246 C124,240 127,243 129,252 L134,291 Z" fill="url(#olv)"/><path d="M35,255.8 H102 C110,255.8 114,250 118,246 C124,240 127,243 129,252 L134,291" fill="none" stroke="#b4b8c0" stroke-width="1"/><text x="248.3" y="229.5" font-size="10.8" text-anchor="middle" fill="#c9d2de" font-weight="normal" >Cutoff</text><line x1="241.80" y1="264.26" x2="238.15" y2="270.58" stroke="#2b2e35" stroke-width="1.15"/><line x1="237.04" y1="259.50" x2="230.72" y2="263.15" stroke="#2b2e35" stroke-width="1.15"/><line x1="235.30" y1="253.00" x2="228.00" y2="253.00" stroke="#2b2e35" stroke-width="1.15"/><line x1="237.04" y1="246.50" x2="230.72" y2="242.85" stroke="#2b2e35" stroke-width="1.15"/><line x1="241.80" y1="241.74" x2="238.15" y2="235.42" stroke="#2b2e35" stroke-width="1.15"/><line x1="248.30" y1="240.00" x2="248.30" y2="232.70" stroke="#2b2e35" stroke-width="1.15"/><line x1="254.80" y1="241.74" x2="258.45" y2="235.42" stroke="#2b2e35" stroke-width="1.15"/><line x1="259.56" y1="246.50" x2="265.88" y2="242.85" stroke="#2b2e35" stroke-width="1.15"/><line x1="261.30" y1="253.00" x2="268.60" y2="253.00" stroke="#2b2e35" stroke-width="1.15"/><line x1="259.56" y1="259.50" x2="265.88" y2="263.15" stroke="#2b2e35" stroke-width="1.15"/><line x1="254.80" y1="264.26" x2="258.45" y2="270.58" stroke="#2b2e35" stroke-width="1.15"/><circle cx="249.10000000000002" cy="254.0" r="14.85" fill="#353840" opacity="0.8"/><circle cx="248.3" cy="253" r="14.25" fill="url(#kg)" stroke="#b2bccb" stroke-width="0.7"/><circle cx="248.30" cy="243.90" r="3.3" fill="#474b55" stroke="#d5dce6" stroke-width="1.0"/><rect x="222.5" y="274.5" width="51.0" height="16.0" rx="3" fill="#363941"/><rect x="223.1" y="275.1" width="36.9" height="14.8" rx="2.5" fill="#3c4049"/><path d="M260.0,275.1 H270.4 Q272.9,275.1 272.9,277.6 V287.40000000000003 Q272.9,289.90000000000003 270.4,289.90000000000003 H260.0 Z" fill="#686e7a"/><path d="M260.5,289.90000000000003 V275.6 H270.4 Q272.4,275.6 272.4,277.6 V287.40000000000003" fill="none" stroke="#7c828e" stroke-width="1"/><path d="M262.75,281.8 L269.54999999999995,281.8 L266.15,278.0 Z" fill="#a0a8b5"/><path d="M262.75,283.0 L269.54999999999995,283.0 L266.15,286.9 Z" fill="#a0a8b5"/><text x="241.2" y="285.9" font-size="11" text-anchor="middle" fill="#dbe3ee" font-weight="normal" >50.0</text><text x="308.3" y="229.5" font-size="10.8" text-anchor="middle" fill="#c9d2de" font-weight="normal" >Reso</text><line x1="301.80" y1="264.26" x2="298.15" y2="270.58" stroke="#2b2e35" stroke-width="1.15"/><line x1="297.04" y1="259.50" x2="290.72" y2="263.15" stroke="#2b2e35" stroke-width="1.15"/><line x1="295.30" y1="253.00" x2="288.00" y2="253.00" stroke="#2b2e35" stroke-width="1.15"/><line x1="297.04" y1="246.50" x2="290.72" y2="242.85" stroke="#2b2e35" stroke-width="1.15"/><line x1="301.80" y1="241.74" x2="298.15" y2="235.42" stroke="#2b2e35" stroke-width="1.15"/><line x1="308.30" y1="240.00" x2="308.30" y2="232.70" stroke="#2b2e35" stroke-width="1.15"/><line x1="314.80" y1="241.74" x2="318.45" y2="235.42" stroke="#2b2e35" stroke-width="1.15"/><line x1="319.56" y1="246.50" x2="325.88" y2="242.85" stroke="#2b2e35" stroke-width="1.15"/><line x1="321.30" y1="253.00" x2="328.60" y2="253.00" stroke="#2b2e35" stroke-width="1.15"/><line x1="319.56" y1="259.50" x2="325.88" y2="263.15" stroke="#2b2e35" stroke-width="1.15"/><line x1="314.80" y1="264.26" x2="318.45" y2="270.58" stroke="#2b2e35" stroke-width="1.15"/><circle cx="309.1" cy="254.0" r="14.85" fill="#353840" opacity="0.8"/><circle cx="308.3" cy="253" r="14.25" fill="url(#kg)" stroke="#b2bccb" stroke-width="0.7"/><circle cx="308.30" cy="243.90" r="3.3" fill="#474b55" stroke="#d5dce6" stroke-width="1.0"/><rect x="282.5" y="274.5" width="51.0" height="16.0" rx="3" fill="#363941"/><rect x="283.1" y="275.1" width="36.9" height="14.8" rx="2.5" fill="#3c4049"/><path d="M320.0,275.1 H330.4 Q332.9,275.1 332.9,277.6 V287.40000000000003 Q332.9,289.90000000000003 330.4,289.90000000000003 H320.0 Z" fill="#686e7a"/><path d="M320.5,289.90000000000003 V275.6 H330.4 Q332.4,275.6 332.4,277.6 V287.40000000000003" fill="none" stroke="#7c828e" stroke-width="1"/><path d="M322.75,281.8 L329.54999999999995,281.8 L326.15,278.0 Z" fill="#a0a8b5"/><path d="M322.75,283.0 L329.54999999999995,283.0 L326.15,286.9 Z" fill="#a0a8b5"/><text x="301.2" y="285.9" font-size="11" text-anchor="middle" fill="#dbe3ee" font-weight="normal" >50.0</text><circle cx="348.8" cy="228" r="4.9" fill="#3d4048" opacity="0.6"/><circle cx="348.8" cy="228" r="4.4" fill="url(#lon)"/><text x="358" y="231.8" font-size="8.9" text-anchor="start" fill="#c9d2de" font-weight="normal" >LPF</text><circle cx="348.8" cy="245" r="4.9" fill="#3d4048" opacity="0.6"/><circle cx="348.8" cy="245" r="4.4" fill="url(#loff)"/><circle cx="347.0" cy="243.1" r="1.9" fill="url(#lhi)"/><text x="358" y="248.8" font-size="8.9" text-anchor="start" fill="#c9d2de" font-weight="normal" >BPF</text><circle cx="348.8" cy="262" r="4.9" fill="#3d4048" opacity="0.6"/><circle cx="348.8" cy="262" r="4.4" fill="url(#loff)"/><circle cx="347.0" cy="260.1" r="1.9" fill="url(#lhi)"/><text x="358" y="265.8" font-size="8.9" text-anchor="start" fill="#c9d2de" font-weight="normal" >HPF</text><circle cx="348.8" cy="279" r="4.9" fill="#3d4048" opacity="0.6"/><circle cx="348.8" cy="279" r="4.4" fill="url(#loff)"/><circle cx="347.0" cy="277.1" r="1.9" fill="url(#lhi)"/><text x="358" y="282.8" font-size="8.9" text-anchor="start" fill="#c9d2de" font-weight="normal" >BRF</text><circle cx="408.5" cy="228" r="4.9" fill="#3d4048" opacity="0.6"/><circle cx="408.5" cy="228" r="4.4" fill="url(#loff)"/><circle cx="406.7" cy="226.1" r="1.9" fill="url(#lhi)"/><text x="418" y="231.8" font-size="8.9" text-anchor="start" fill="#c9d2de" font-weight="normal" >12dB/oct</text><circle cx="408.5" cy="245" r="4.9" fill="#3d4048" opacity="0.6"/><circle cx="408.5" cy="245" r="4.4" fill="url(#lon)"/><text x="418" y="248.8" font-size="8.9" text-anchor="start" fill="#c9d2de" font-weight="normal" >24dB/oct</text><circle cx="408.5" cy="262" r="4.9" fill="#3d4048" opacity="0.6"/><circle cx="408.5" cy="262" r="4.4" fill="url(#loff)"/><circle cx="406.7" cy="260.1" r="1.9" fill="url(#lhi)"/><text x="418" y="265.8" font-size="8.9" text-anchor="start" fill="#c9d2de" font-weight="normal" >Biquad</text><circle cx="408.5" cy="279" r="4.9" fill="#3d4048" opacity="0.6"/><circle cx="408.5" cy="279" r="4.4" fill="url(#loff)"/><circle cx="406.7" cy="277.1" r="1.9" fill="url(#lhi)"/><text x="418" y="282.8" font-size="8.9" text-anchor="start" fill="#c9d2de" font-weight="normal" >Formant</text><text x="60.3" y="309.7" font-size="10.8" text-anchor="middle" fill="#c9d2de" font-weight="normal" >Envelope</text><line x1="53.80" y1="344.46" x2="50.15" y2="350.78" stroke="#2b2e35" stroke-width="1.15"/><line x1="49.04" y1="339.70" x2="42.72" y2="343.35" stroke="#2b2e35" stroke-width="1.15"/><line x1="47.30" y1="333.20" x2="40.00" y2="333.20" stroke="#2b2e35" stroke-width="1.15"/><line x1="49.04" y1="326.70" x2="42.72" y2="323.05" stroke="#2b2e35" stroke-width="1.15"/><line x1="53.80" y1="321.94" x2="50.15" y2="315.62" stroke="#2b2e35" stroke-width="1.15"/><line x1="60.30" y1="320.20" x2="60.30" y2="312.90" stroke="#2b2e35" stroke-width="1.15"/><line x1="66.80" y1="321.94" x2="70.45" y2="315.62" stroke="#2b2e35" stroke-width="1.15"/><line x1="71.56" y1="326.70" x2="77.88" y2="323.05" stroke="#2b2e35" stroke-width="1.15"/><line x1="73.30" y1="333.20" x2="80.60" y2="333.20" stroke="#2b2e35" stroke-width="1.15"/><line x1="71.56" y1="339.70" x2="77.88" y2="343.35" stroke="#2b2e35" stroke-width="1.15"/><line x1="66.80" y1="344.46" x2="70.45" y2="350.78" stroke="#2b2e35" stroke-width="1.15"/><circle cx="61.099999999999994" cy="334.2" r="14.85" fill="#353840" opacity="0.8"/><circle cx="60.3" cy="333.2" r="14.25" fill="url(#kg)" stroke="#b2bccb" stroke-width="0.7"/><circle cx="64.85" cy="341.08" r="3.3" fill="#474b55" stroke="#d5dce6" stroke-width="1.0"/><rect x="34.5" y="354.7" width="51.0" height="16.0" rx="3" fill="#363941"/><rect x="35.1" y="355.3" width="36.9" height="14.8" rx="2.5" fill="#3c4049"/><path d="M72.0,355.3 H82.4 Q84.9,355.3 84.9,357.8 V367.6 Q84.9,370.1 82.4,370.1 H72.0 Z" fill="#686e7a"/><path d="M72.5,370.1 V355.8 H82.4 Q84.4,355.8 84.4,357.8 V367.6" fill="none" stroke="#7c828e" stroke-width="1"/><path d="M74.75,362.0 L81.55000000000001,362.0 L78.15,358.2 Z" fill="#868c98"/><path d="M74.75,363.2 L81.55000000000001,363.2 L78.15,367.09999999999997 Z" fill="#a0a8b5"/><text x="53.2" y="366.1" font-size="11" text-anchor="middle" fill="#dbe3ee" font-weight="normal" >100.0</text><rect x="94" y="300" width="120" height="72" fill="#2b2d34"/><rect x="94" y="300" width="120" height="1" fill="#2d2f3a"/><rect x="94" y="300" width="1" height="72" fill="#2d2f3a"/><rect x="94" y="371" width="120" height="1" fill="#6c7281"/><rect x="213" y="300" width="1" height="72" fill="#6c7281"/><path d="M99.75,371 L99.75,366 L104.8,306 L121,336 L148,336 L161,366 L161,371 Z" fill="url(#olv)"/><path d="M99.75,366 L104.8,306 L121,336 L148,336 L161,366" fill="none" stroke="#b4b8c0" stroke-width="1"/><rect x="96.0" y="362.25" width="7.5" height="7.5" fill="#3b3f49" stroke="#a4a68c" stroke-width="1"/><rect x="101.05" y="302.25" width="7.5" height="7.5" fill="#7d7900" stroke="#a4a68c" stroke-width="1"/><rect x="117.25" y="332.25" width="7.5" height="7.5" fill="#7d7900" stroke="#a4a68c" stroke-width="1"/><rect x="144.25" y="332.25" width="7.5" height="7.5" fill="#7d7900" stroke="#a4a68c" stroke-width="1"/><rect x="157.25" y="362.25" width="7.5" height="7.5" fill="#7d7900" stroke="#a4a68c" stroke-width="1"/><text x="248.3" y="309.7" font-size="10.8" text-anchor="middle" fill="#c9d2de" font-weight="normal" >Attack</text><line x1="241.80" y1="344.46" x2="238.15" y2="350.78" stroke="#2b2e35" stroke-width="1.15"/><line x1="237.04" y1="339.70" x2="230.72" y2="343.35" stroke="#2b2e35" stroke-width="1.15"/><line x1="235.30" y1="333.20" x2="228.00" y2="333.20" stroke="#2b2e35" stroke-width="1.15"/><line x1="237.04" y1="326.70" x2="230.72" y2="323.05" stroke="#2b2e35" stroke-width="1.15"/><line x1="241.80" y1="321.94" x2="238.15" y2="315.62" stroke="#2b2e35" stroke-width="1.15"/><line x1="248.30" y1="320.20" x2="248.30" y2="312.90" stroke="#2b2e35" stroke-width="1.15"/><line x1="254.80" y1="321.94" x2="258.45" y2="315.62" stroke="#2b2e35" stroke-width="1.15"/><line x1="259.56" y1="326.70" x2="265.88" y2="323.05" stroke="#2b2e35" stroke-width="1.15"/><line x1="261.30" y1="333.20" x2="268.60" y2="333.20" stroke="#2b2e35" stroke-width="1.15"/><line x1="259.56" y1="339.70" x2="265.88" y2="343.35" stroke="#2b2e35" stroke-width="1.15"/><line x1="254.80" y1="344.46" x2="258.45" y2="350.78" stroke="#2b2e35" stroke-width="1.15"/><circle cx="249.10000000000002" cy="334.2" r="14.85" fill="#353840" opacity="0.8"/><circle cx="248.3" cy="333.2" r="14.25" fill="url(#kg)" stroke="#b2bccb" stroke-width="0.7"/><circle cx="239.20" cy="333.20" r="3.3" fill="#474b55" stroke="#d5dce6" stroke-width="1.0"/><rect x="222.5" y="354.7" width="51.0" height="16.0" rx="3" fill="#363941"/><rect x="223.1" y="355.3" width="36.9" height="14.8" rx="2.5" fill="#403d08"/><path d="M260.0,355.3 H270.4 Q272.9,355.3 272.9,357.8 V367.6 Q272.9,370.1 270.4,370.1 H260.0 Z" fill="#686e7a"/><path d="M260.5,370.1 V355.8 H270.4 Q272.4,355.8 272.4,357.8 V367.6" fill="none" stroke="#7c828e" stroke-width="1"/><path d="M262.75,362.0 L269.54999999999995,362.0 L266.15,358.2 Z" fill="#a0a8b5"/><path d="M262.75,363.2 L269.54999999999995,363.2 L266.15,367.09999999999997 Z" fill="#a0a8b5"/><text x="241.2" y="366.1" font-size="11" text-anchor="middle" fill="#dbe3ee" font-weight="normal" >20.0</text><text x="308.3" y="309.7" font-size="10.8" text-anchor="middle" fill="#c9d2de" font-weight="normal" >Decay</text><line x1="301.80" y1="344.46" x2="298.15" y2="350.78" stroke="#2b2e35" stroke-width="1.15"/><line x1="297.04" y1="339.70" x2="290.72" y2="343.35" stroke="#2b2e35" stroke-width="1.15"/><line x1="295.30" y1="333.20" x2="288.00" y2="333.20" stroke="#2b2e35" stroke-width="1.15"/><line x1="297.04" y1="326.70" x2="290.72" y2="323.05" stroke="#2b2e35" stroke-width="1.15"/><line x1="301.80" y1="321.94" x2="298.15" y2="315.62" stroke="#2b2e35" stroke-width="1.15"/><line x1="308.30" y1="320.20" x2="308.30" y2="312.90" stroke="#2b2e35" stroke-width="1.15"/><line x1="314.80" y1="321.94" x2="318.45" y2="315.62" stroke="#2b2e35" stroke-width="1.15"/><line x1="319.56" y1="326.70" x2="325.88" y2="323.05" stroke="#2b2e35" stroke-width="1.15"/><line x1="321.30" y1="333.20" x2="328.60" y2="333.20" stroke="#2b2e35" stroke-width="1.15"/><line x1="319.56" y1="339.70" x2="325.88" y2="343.35" stroke="#2b2e35" stroke-width="1.15"/><line x1="314.80" y1="344.46" x2="318.45" y2="350.78" stroke="#2b2e35" stroke-width="1.15"/><circle cx="309.1" cy="334.2" r="14.85" fill="#353840" opacity="0.8"/><circle cx="308.3" cy="333.2" r="14.25" fill="url(#kg)" stroke="#b2bccb" stroke-width="0.7"/><circle cx="312.85" cy="325.32" r="3.3" fill="#474b55" stroke="#d5dce6" stroke-width="1.0"/><rect x="282.5" y="354.7" width="51.0" height="16.0" rx="3" fill="#363941"/><rect x="283.1" y="355.3" width="36.9" height="14.8" rx="2.5" fill="#403d08"/><path d="M320.0,355.3 H330.4 Q332.9,355.3 332.9,357.8 V367.6 Q332.9,370.1 330.4,370.1 H320.0 Z" fill="#686e7a"/><path d="M320.5,370.1 V355.8 H330.4 Q332.4,355.8 332.4,357.8 V367.6" fill="none" stroke="#7c828e" stroke-width="1"/><path d="M322.75,362.0 L329.54999999999995,362.0 L326.15,358.2 Z" fill="#a0a8b5"/><path d="M322.75,363.2 L329.54999999999995,363.2 L326.15,367.09999999999997 Z" fill="#a0a8b5"/><text x="301.2" y="366.1" font-size="11" text-anchor="middle" fill="#dbe3ee" font-weight="normal" >60.0</text><text x="368.3" y="309.7" font-size="10.8" text-anchor="middle" fill="#c9d2de" font-weight="normal" >Sustain</text><line x1="361.80" y1="344.46" x2="358.15" y2="350.78" stroke="#2b2e35" stroke-width="1.15"/><line x1="357.04" y1="339.70" x2="350.72" y2="343.35" stroke="#2b2e35" stroke-width="1.15"/><line x1="355.30" y1="333.20" x2="348.00" y2="333.20" stroke="#2b2e35" stroke-width="1.15"/><line x1="357.04" y1="326.70" x2="350.72" y2="323.05" stroke="#2b2e35" stroke-width="1.15"/><line x1="361.80" y1="321.94" x2="358.15" y2="315.62" stroke="#2b2e35" stroke-width="1.15"/><line x1="368.30" y1="320.20" x2="368.30" y2="312.90" stroke="#2b2e35" stroke-width="1.15"/><line x1="374.80" y1="321.94" x2="378.45" y2="315.62" stroke="#2b2e35" stroke-width="1.15"/><line x1="379.56" y1="326.70" x2="385.88" y2="323.05" stroke="#2b2e35" stroke-width="1.15"/><line x1="381.30" y1="333.20" x2="388.60" y2="333.20" stroke="#2b2e35" stroke-width="1.15"/><line x1="379.56" y1="339.70" x2="385.88" y2="343.35" stroke="#2b2e35" stroke-width="1.15"/><line x1="374.80" y1="344.46" x2="378.45" y2="350.78" stroke="#2b2e35" stroke-width="1.15"/><circle cx="369.1" cy="334.2" r="14.85" fill="#353840" opacity="0.8"/><circle cx="368.3" cy="333.2" r="14.25" fill="url(#kg)" stroke="#b2bccb" stroke-width="0.7"/><circle cx="368.30" cy="324.10" r="3.3" fill="#474b55" stroke="#d5dce6" stroke-width="1.0"/><rect x="342.5" y="354.7" width="51.0" height="16.0" rx="3" fill="#363941"/><rect x="343.1" y="355.3" width="36.9" height="14.8" rx="2.5" fill="#3c4049"/><path d="M380.0,355.3 H390.4 Q392.9,355.3 392.9,357.8 V367.6 Q392.9,370.1 390.4,370.1 H380.0 Z" fill="#686e7a"/><path d="M380.5,370.1 V355.8 H390.4 Q392.4,355.8 392.4,357.8 V367.6" fill="none" stroke="#7c828e" stroke-width="1"/><path d="M382.75,362.0 L389.54999999999995,362.0 L386.15,358.2 Z" fill="#a0a8b5"/><path d="M382.75,363.2 L389.54999999999995,363.2 L386.15,367.09999999999997 Z" fill="#a0a8b5"/><text x="361.2" y="366.1" font-size="11" text-anchor="middle" fill="#dbe3ee" font-weight="normal" >50.0</text><text x="428.3" y="309.7" font-size="10.8" text-anchor="middle" fill="#c9d2de" font-weight="normal" >Release</text><line x1="421.80" y1="344.46" x2="418.15" y2="350.78" stroke="#2b2e35" stroke-width="1.15"/><line x1="417.04" y1="339.70" x2="410.72" y2="343.35" stroke="#2b2e35" stroke-width="1.15"/><line x1="415.30" y1="333.20" x2="408.00" y2="333.20" stroke="#2b2e35" stroke-width="1.15"/><line x1="417.04" y1="326.70" x2="410.72" y2="323.05" stroke="#2b2e35" stroke-width="1.15"/><line x1="421.80" y1="321.94" x2="418.15" y2="315.62" stroke="#2b2e35" stroke-width="1.15"/><line x1="428.30" y1="320.20" x2="428.30" y2="312.90" stroke="#2b2e35" stroke-width="1.15"/><line x1="434.80" y1="321.94" x2="438.45" y2="315.62" stroke="#2b2e35" stroke-width="1.15"/><line x1="439.56" y1="326.70" x2="445.88" y2="323.05" stroke="#2b2e35" stroke-width="1.15"/><line x1="441.30" y1="333.20" x2="448.60" y2="333.20" stroke="#2b2e35" stroke-width="1.15"/><line x1="439.56" y1="339.70" x2="445.88" y2="343.35" stroke="#2b2e35" stroke-width="1.15"/><line x1="434.80" y1="344.46" x2="438.45" y2="350.78" stroke="#2b2e35" stroke-width="1.15"/><circle cx="429.1" cy="334.2" r="14.85" fill="#353840" opacity="0.8"/><circle cx="428.3" cy="333.2" r="14.25" fill="url(#kg)" stroke="#b2bccb" stroke-width="0.7"/><circle cx="428.30" cy="324.10" r="3.3" fill="#474b55" stroke="#d5dce6" stroke-width="1.0"/><rect x="402.5" y="354.7" width="51.0" height="16.0" rx="3" fill="#363941"/><rect x="403.1" y="355.3" width="36.9" height="14.8" rx="2.5" fill="#3c4049"/><path d="M440.0,355.3 H450.4 Q452.9,355.3 452.9,357.8 V367.6 Q452.9,370.1 450.4,370.1 H440.0 Z" fill="#686e7a"/><path d="M440.5,370.1 V355.8 H450.4 Q452.4,355.8 452.4,357.8 V367.6" fill="none" stroke="#7c828e" stroke-width="1"/><path d="M442.75,362.0 L449.54999999999995,362.0 L446.15,358.2 Z" fill="#a0a8b5"/><path d="M442.75,363.2 L449.54999999999995,363.2 L446.15,367.09999999999997 Z" fill="#a0a8b5"/><text x="421.2" y="366.1" font-size="11" text-anchor="middle" fill="#dbe3ee" font-weight="normal" >50.0</text><rect x="484" y="226" width="60" height="60" fill="#2b2d34"/><rect x="484" y="226" width="60" height="1" fill="#2d2f3a"/><rect x="484" y="226" width="1" height="60" fill="#2d2f3a"/><rect x="484" y="285" width="60" height="1" fill="#6c7281"/><rect x="543" y="226" width="1" height="60" fill="#6c7281"/><rect x="514" y="227" width="1" height="58" fill="#3f434d"/><rect x="485" y="256" width="58" height="1" fill="#3f434d"/><polyline points="484.8,257.2 485.4,228.5 489.5,228.5 490.6,247 493.7,247 495.7,283.5 500.8,283.5 501.9,260.3 507,260.3 508,228.9 513.2,228.9 514.2,231.5 518.3,231.5 519.3,235 523.4,235 525.5,275.7 531.6,275.7 533.7,240.4 537.8,240.4 538.8,256.6 543.5,256.6" fill="none" stroke="#8a8800" stroke-width="2.3"/><circle cx="558.8" cy="227" r="4.9" fill="#3d4048" opacity="0.6"/><circle cx="558.8" cy="227" r="4.4" fill="url(#loff)"/><circle cx="557.0" cy="225.1" r="1.9" fill="url(#lhi)"/><text x="568" y="230.8" font-size="8.9" text-anchor="start" fill="#c9d2de" font-weight="normal" >Pulse</text><circle cx="558.8" cy="242" r="4.9" fill="#3d4048" opacity="0.6"/><circle cx="558.8" cy="242" r="4.4" fill="url(#loff)"/><circle cx="557.0" cy="240.1" r="1.9" fill="url(#lhi)"/><text x="568" y="245.8" font-size="8.9" text-anchor="start" fill="#c9d2de" font-weight="normal" >Saw</text><circle cx="558.8" cy="256.3" r="4.9" fill="#3d4048" opacity="0.6"/><circle cx="558.8" cy="256.3" r="4.4" fill="url(#loff)"/><circle cx="557.0" cy="254.4" r="1.9" fill="url(#lhi)"/><text x="568" y="260.1" font-size="8.9" text-anchor="start" fill="#c9d2de" font-weight="normal" >Sine</text><circle cx="558.8" cy="271.2" r="4.9" fill="#3d4048" opacity="0.6"/><circle cx="558.8" cy="271.2" r="4.4" fill="url(#lon)"/><text x="568" y="275.0" font-size="8.9" text-anchor="start" fill="#c9d2de" font-weight="normal" >Rand</text><circle cx="558.8" cy="285.2" r="4.9" fill="#3d4048" opacity="0.6"/><circle cx="558.8" cy="285.2" r="4.4" fill="url(#loff)"/><circle cx="557.0" cy="283.3" r="1.9" fill="url(#lhi)"/><text x="568" y="289.0" font-size="8.9" text-anchor="start" fill="#c9d2de" font-weight="normal" >Noise</text><text x="638.3" y="229.5" font-size="10.8" text-anchor="middle" fill="#c9d2de" font-weight="normal" >Width</text><line x1="631.80" y1="264.26" x2="628.15" y2="270.58" stroke="#2b2e35" stroke-width="1.15"/><line x1="627.04" y1="259.50" x2="620.72" y2="263.15" stroke="#2b2e35" stroke-width="1.15"/><line x1="625.30" y1="253.00" x2="618.00" y2="253.00" stroke="#2b2e35" stroke-width="1.15"/><line x1="627.04" y1="246.50" x2="620.72" y2="242.85" stroke="#2b2e35" stroke-width="1.15"/><line x1="631.80" y1="241.74" x2="628.15" y2="235.42" stroke="#2b2e35" stroke-width="1.15"/><line x1="638.30" y1="240.00" x2="638.30" y2="232.70" stroke="#2b2e35" stroke-width="1.15"/><line x1="644.80" y1="241.74" x2="648.45" y2="235.42" stroke="#2b2e35" stroke-width="1.15"/><line x1="649.56" y1="246.50" x2="655.88" y2="242.85" stroke="#2b2e35" stroke-width="1.15"/><line x1="651.30" y1="253.00" x2="658.60" y2="253.00" stroke="#2b2e35" stroke-width="1.15"/><line x1="649.56" y1="259.50" x2="655.88" y2="263.15" stroke="#2b2e35" stroke-width="1.15"/><line x1="644.80" y1="264.26" x2="648.45" y2="270.58" stroke="#2b2e35" stroke-width="1.15"/><circle cx="639.0999999999999" cy="254.0" r="14.85" fill="#353840" opacity="0.8"/><circle cx="638.3" cy="253" r="14.25" fill="url(#kg)" stroke="#b2bccb" stroke-width="0.7"/><circle cx="629.51" cy="250.64" r="3.3" fill="#474b55" stroke="#d5dce6" stroke-width="1.0"/><rect x="614.3" y="274.5" width="47.40000000000009" height="16.0" rx="3" fill="#363941"/><rect x="614.9" y="275.1" width="33.30000000000009" height="14.8" rx="2.5" fill="#403d08"/><path d="M648.2,275.1 H658.6 Q661.1,275.1 661.1,277.6 V287.40000000000003 Q661.1,289.90000000000003 658.6,289.90000000000003 H648.2 Z" fill="#686e7a"/><path d="M648.7,289.90000000000003 V275.6 H658.6 Q660.6,275.6 660.6,277.6 V287.40000000000003" fill="none" stroke="#7c828e" stroke-width="1"/><path d="M650.95,281.8 L657.75,281.8 L654.35,278.0 Z" fill="#a0a8b5"/><path d="M650.95,283.0 L657.75,283.0 L654.35,286.9 Z" fill="#a0a8b5"/><text x="631.2" y="285.9" font-size="11" text-anchor="middle" fill="#dbe3ee" font-weight="normal" >25</text><rect x="672" y="220" width="222" height="72" fill="#2b2d34"/><rect x="672" y="220" width="222" height="1" fill="#2d2f3a"/><rect x="672" y="220" width="1" height="72" fill="#2d2f3a"/><rect x="672" y="291" width="222" height="1" fill="#6c7281"/><rect x="893" y="220" width="1" height="72" fill="#6c7281"/><path d="M677.6,291 L677.6,285.9 L703.6,226 L755.8,249 L808,249 L833.7,285.9 L833.7,291 Z" fill="url(#olv)"/><path d="M677.6,285.9 L703.6,226 L755.8,249 L808,249 L833.7,285.9" fill="none" stroke="#b4b8c0" stroke-width="1"/><rect x="673.85" y="282.15" width="7.5" height="7.5" fill="#3b3f49" stroke="#a4a68c" stroke-width="1"/><rect x="699.85" y="222.25" width="7.5" height="7.5" fill="#7d7900" stroke="#a4a68c" stroke-width="1"/><rect x="752.05" y="245.25" width="7.5" height="7.5" fill="#7d7900" stroke="#a4a68c" stroke-width="1"/><rect x="804.25" y="245.25" width="7.5" height="7.5" fill="#7d7900" stroke="#a4a68c" stroke-width="1"/><rect x="829.95" y="282.15" width="7.5" height="7.5" fill="#7d7900" stroke="#a4a68c" stroke-width="1"/><text x="928.3" y="229.5" font-size="10.8" text-anchor="middle" fill="#c9d2de" font-weight="normal" >Attack</text><line x1="921.80" y1="264.26" x2="918.15" y2="270.58" stroke="#2b2e35" stroke-width="1.15"/><line x1="917.04" y1="259.50" x2="910.72" y2="263.15" stroke="#2b2e35" stroke-width="1.15"/><line x1="915.30" y1="253.00" x2="908.00" y2="253.00" stroke="#2b2e35" stroke-width="1.15"/><line x1="917.04" y1="246.50" x2="910.72" y2="242.85" stroke="#2b2e35" stroke-width="1.15"/><line x1="921.80" y1="241.74" x2="918.15" y2="235.42" stroke="#2b2e35" stroke-width="1.15"/><line x1="928.30" y1="240.00" x2="928.30" y2="232.70" stroke="#2b2e35" stroke-width="1.15"/><line x1="934.80" y1="241.74" x2="938.45" y2="235.42" stroke="#2b2e35" stroke-width="1.15"/><line x1="939.56" y1="246.50" x2="945.88" y2="242.85" stroke="#2b2e35" stroke-width="1.15"/><line x1="941.30" y1="253.00" x2="948.60" y2="253.00" stroke="#2b2e35" stroke-width="1.15"/><line x1="939.56" y1="259.50" x2="945.88" y2="263.15" stroke="#2b2e35" stroke-width="1.15"/><line x1="934.80" y1="264.26" x2="938.45" y2="270.58" stroke="#2b2e35" stroke-width="1.15"/><circle cx="929.0999999999999" cy="254.0" r="14.85" fill="#353840" opacity="0.8"/><circle cx="928.3" cy="253" r="14.25" fill="url(#kg)" stroke="#b2bccb" stroke-width="0.7"/><circle cx="928.30" cy="243.90" r="3.3" fill="#474b55" stroke="#d5dce6" stroke-width="1.0"/><rect x="902.5" y="274.5" width="51.0" height="16.0" rx="3" fill="#363941"/><rect x="903.1" y="275.1" width="36.9" height="14.8" rx="2.5" fill="#3c4049"/><path d="M940.0,275.1 H950.4 Q952.9,275.1 952.9,277.6 V287.40000000000003 Q952.9,289.90000000000003 950.4,289.90000000000003 H940.0 Z" fill="#686e7a"/><path d="M940.5,289.90000000000003 V275.6 H950.4 Q952.4,275.6 952.4,277.6 V287.40000000000003" fill="none" stroke="#7c828e" stroke-width="1"/><path d="M942.75,281.8 L949.55,281.8 L946.15,278.0 Z" fill="#a0a8b5"/><path d="M942.75,283.0 L949.55,283.0 L946.15,286.9 Z" fill="#a0a8b5"/><text x="921.2" y="285.9" font-size="11" text-anchor="middle" fill="#dbe3ee" font-weight="normal" >50.0</text><text x="988.3" y="229.5" font-size="10.8" text-anchor="middle" fill="#c9d2de" font-weight="normal" >Decay</text><line x1="981.80" y1="264.26" x2="978.15" y2="270.58" stroke="#2b2e35" stroke-width="1.15"/><line x1="977.04" y1="259.50" x2="970.72" y2="263.15" stroke="#2b2e35" stroke-width="1.15"/><line x1="975.30" y1="253.00" x2="968.00" y2="253.00" stroke="#2b2e35" stroke-width="1.15"/><line x1="977.04" y1="246.50" x2="970.72" y2="242.85" stroke="#2b2e35" stroke-width="1.15"/><line x1="981.80" y1="241.74" x2="978.15" y2="235.42" stroke="#2b2e35" stroke-width="1.15"/><line x1="988.30" y1="240.00" x2="988.30" y2="232.70" stroke="#2b2e35" stroke-width="1.15"/><line x1="994.80" y1="241.74" x2="998.45" y2="235.42" stroke="#2b2e35" stroke-width="1.15"/><line x1="999.56" y1="246.50" x2="1005.88" y2="242.85" stroke="#2b2e35" stroke-width="1.15"/><line x1="1001.30" y1="253.00" x2="1008.60" y2="253.00" stroke="#2b2e35" stroke-width="1.15"/><line x1="999.56" y1="259.50" x2="1005.88" y2="263.15" stroke="#2b2e35" stroke-width="1.15"/><line x1="994.80" y1="264.26" x2="998.45" y2="270.58" stroke="#2b2e35" stroke-width="1.15"/><circle cx="989.0999999999999" cy="254.0" r="14.85" fill="#353840" opacity="0.8"/><circle cx="988.3" cy="253" r="14.25" fill="url(#kg)" stroke="#b2bccb" stroke-width="0.7"/><circle cx="992.85" cy="260.88" r="3.3" fill="#474b55" stroke="#d5dce6" stroke-width="1.0"/><rect x="962.5" y="274.5" width="51.0" height="16.0" rx="3" fill="#363941"/><rect x="963.1" y="275.1" width="36.9" height="14.8" rx="2.5" fill="#3c4049"/><path d="M1000.0,275.1 H1010.4 Q1012.9,275.1 1012.9,277.6 V287.40000000000003 Q1012.9,289.90000000000003 1010.4,289.90000000000003 H1000.0 Z" fill="#686e7a"/><path d="M1000.5,289.90000000000003 V275.6 H1010.4 Q1012.4,275.6 1012.4,277.6 V287.40000000000003" fill="none" stroke="#7c828e" stroke-width="1"/><path d="M1002.75,281.8 L1009.55,281.8 L1006.15,278.0 Z" fill="#868c98"/><path d="M1002.75,283.0 L1009.55,283.0 L1006.15,286.9 Z" fill="#a0a8b5"/><text x="981.2" y="285.9" font-size="11" text-anchor="middle" fill="#dbe3ee" font-weight="normal" >100.0</text><text x="1048.3" y="229.5" font-size="10.8" text-anchor="middle" fill="#c9d2de" font-weight="normal" >Sustain</text><line x1="1041.80" y1="264.26" x2="1038.15" y2="270.58" stroke="#2b2e35" stroke-width="1.15"/><line x1="1037.04" y1="259.50" x2="1030.72" y2="263.15" stroke="#2b2e35" stroke-width="1.15"/><line x1="1035.30" y1="253.00" x2="1028.00" y2="253.00" stroke="#2b2e35" stroke-width="1.15"/><line x1="1037.04" y1="246.50" x2="1030.72" y2="242.85" stroke="#2b2e35" stroke-width="1.15"/><line x1="1041.80" y1="241.74" x2="1038.15" y2="235.42" stroke="#2b2e35" stroke-width="1.15"/><line x1="1048.30" y1="240.00" x2="1048.30" y2="232.70" stroke="#2b2e35" stroke-width="1.15"/><line x1="1054.80" y1="241.74" x2="1058.45" y2="235.42" stroke="#2b2e35" stroke-width="1.15"/><line x1="1059.56" y1="246.50" x2="1065.88" y2="242.85" stroke="#2b2e35" stroke-width="1.15"/><line x1="1061.30" y1="253.00" x2="1068.60" y2="253.00" stroke="#2b2e35" stroke-width="1.15"/><line x1="1059.56" y1="259.50" x2="1065.88" y2="263.15" stroke="#2b2e35" stroke-width="1.15"/><line x1="1054.80" y1="264.26" x2="1058.45" y2="270.58" stroke="#2b2e35" stroke-width="1.15"/><circle cx="1049.1" cy="254.0" r="14.85" fill="#353840" opacity="0.8"/><circle cx="1048.3" cy="253" r="14.25" fill="url(#kg)" stroke="#b2bccb" stroke-width="0.7"/><circle cx="1053.65" cy="245.64" r="3.3" fill="#474b55" stroke="#d5dce6" stroke-width="1.0"/><rect x="1022.5" y="274.5" width="51.0" height="16.0" rx="3" fill="#363941"/><rect x="1023.1" y="275.1" width="36.9" height="14.8" rx="2.5" fill="#3c4049"/><path d="M1060.0,275.1 H1070.4 Q1072.9,275.1 1072.9,277.6 V287.40000000000003 Q1072.9,289.90000000000003 1070.4,289.90000000000003 H1060.0 Z" fill="#686e7a"/><path d="M1060.5,289.90000000000003 V275.6 H1070.4 Q1072.4,275.6 1072.4,277.6 V287.40000000000003" fill="none" stroke="#7c828e" stroke-width="1"/><path d="M1062.75,281.8 L1069.5500000000002,281.8 L1066.15,278.0 Z" fill="#a0a8b5"/><path d="M1062.75,283.0 L1069.5500000000002,283.0 L1066.15,286.9 Z" fill="#a0a8b5"/><text x="1041.2" y="285.9" font-size="11" text-anchor="middle" fill="#dbe3ee" font-weight="normal" >62.0</text><text x="1108.3" y="229.5" font-size="10.8" text-anchor="middle" fill="#c9d2de" font-weight="normal" >Release</text><line x1="1101.80" y1="264.26" x2="1098.15" y2="270.58" stroke="#2b2e35" stroke-width="1.15"/><line x1="1097.04" y1="259.50" x2="1090.72" y2="263.15" stroke="#2b2e35" stroke-width="1.15"/><line x1="1095.30" y1="253.00" x2="1088.00" y2="253.00" stroke="#2b2e35" stroke-width="1.15"/><line x1="1097.04" y1="246.50" x2="1090.72" y2="242.85" stroke="#2b2e35" stroke-width="1.15"/><line x1="1101.80" y1="241.74" x2="1098.15" y2="235.42" stroke="#2b2e35" stroke-width="1.15"/><line x1="1108.30" y1="240.00" x2="1108.30" y2="232.70" stroke="#2b2e35" stroke-width="1.15"/><line x1="1114.80" y1="241.74" x2="1118.45" y2="235.42" stroke="#2b2e35" stroke-width="1.15"/><line x1="1119.56" y1="246.50" x2="1125.88" y2="242.85" stroke="#2b2e35" stroke-width="1.15"/><line x1="1121.30" y1="253.00" x2="1128.60" y2="253.00" stroke="#2b2e35" stroke-width="1.15"/><line x1="1119.56" y1="259.50" x2="1125.88" y2="263.15" stroke="#2b2e35" stroke-width="1.15"/><line x1="1114.80" y1="264.26" x2="1118.45" y2="270.58" stroke="#2b2e35" stroke-width="1.15"/><circle cx="1109.1" cy="254.0" r="14.85" fill="#353840" opacity="0.8"/><circle cx="1108.3" cy="253" r="14.25" fill="url(#kg)" stroke="#b2bccb" stroke-width="0.7"/><circle cx="1108.30" cy="243.90" r="3.3" fill="#474b55" stroke="#d5dce6" stroke-width="1.0"/><rect x="1082.5" y="274.5" width="51.0" height="16.0" rx="3" fill="#363941"/><rect x="1083.1" y="275.1" width="36.9" height="14.8" rx="2.5" fill="#3c4049"/><path d="M1120.0,275.1 H1130.4 Q1132.9,275.1 1132.9,277.6 V287.40000000000003 Q1132.9,289.90000000000003 1130.4,289.90000000000003 H1120.0 Z" fill="#686e7a"/><path d="M1120.5,289.90000000000003 V275.6 H1130.4 Q1132.4,275.6 1132.4,277.6 V287.40000000000003" fill="none" stroke="#7c828e" stroke-width="1"/><path d="M1122.75,281.8 L1129.5500000000002,281.8 L1126.15,278.0 Z" fill="#a0a8b5"/><path d="M1122.75,283.0 L1129.5500000000002,283.0 L1126.15,286.9 Z" fill="#a0a8b5"/><text x="1101.2" y="285.9" font-size="11" text-anchor="middle" fill="#dbe3ee" font-weight="normal" >50.0</text><text x="510.3" y="309.8" font-size="10.8" text-anchor="middle" fill="#c9d2de" font-weight="normal" >BPM</text><line x1="503.80" y1="344.56" x2="500.15" y2="350.88" stroke="#2b2e35" stroke-width="1.15"/><line x1="498.68" y1="339.13" x2="492.16" y2="342.41" stroke="#2b2e35" stroke-width="1.15"/><line x1="497.39" y1="331.79" x2="490.14" y2="330.94" stroke="#2b2e35" stroke-width="1.15"/><line x1="500.34" y1="324.94" x2="494.75" y2="320.25" stroke="#2b2e35" stroke-width="1.15"/><line x1="506.57" y1="320.85" x2="504.48" y2="313.85" stroke="#2b2e35" stroke-width="1.15"/><line x1="514.03" y1="320.85" x2="516.12" y2="313.85" stroke="#2b2e35" stroke-width="1.15"/><line x1="520.26" y1="324.94" x2="525.85" y2="320.25" stroke="#2b2e35" stroke-width="1.15"/><line x1="523.21" y1="331.79" x2="530.46" y2="330.94" stroke="#2b2e35" stroke-width="1.15"/><line x1="521.92" y1="339.13" x2="528.44" y2="342.41" stroke="#2b2e35" stroke-width="1.15"/><line x1="516.80" y1="344.56" x2="520.45" y2="350.88" stroke="#2b2e35" stroke-width="1.15"/><circle cx="511.1" cy="334.3" r="14.85" fill="#353840" opacity="0.8"/><circle cx="510.3" cy="333.3" r="14.25" fill="url(#kg)" stroke="#b2bccb" stroke-width="0.7"/><circle cx="503.32" cy="327.46" r="3.3" fill="#474b55" stroke="#d5dce6" stroke-width="1.0"/><rect x="484.5" y="354.8" width="51.0" height="16.0" rx="3" fill="#363941"/><rect x="485.1" y="355.40000000000003" width="36.9" height="14.8" rx="2.5" fill="#403d08"/><path d="M522.0,355.40000000000003 H532.4 Q534.9,355.40000000000003 534.9,357.90000000000003 V367.70000000000005 Q534.9,370.20000000000005 532.4,370.20000000000005 H522.0 Z" fill="#686e7a"/><path d="M522.5,370.20000000000005 V355.90000000000003 H532.4 Q534.4,355.90000000000003 534.4,357.90000000000003 V367.70000000000005" fill="none" stroke="#7c828e" stroke-width="1"/><path d="M524.75,362.1 L531.55,362.1 L528.15,358.3 Z" fill="#a0a8b5"/><path d="M524.75,363.3 L531.55,363.3 L528.15,367.2 Z" fill="#a0a8b5"/><text x="503.2" y="366.2" font-size="11" text-anchor="middle" fill="#dbe3ee" font-weight="normal" >120.0</text><text x="570.3" y="309.8" font-size="10.8" text-anchor="middle" fill="#c9d2de" font-weight="normal" >Rate</text><line x1="563.80" y1="344.56" x2="560.15" y2="350.88" stroke="#2b2e35" stroke-width="1.15"/><line x1="559.04" y1="339.80" x2="552.72" y2="343.45" stroke="#2b2e35" stroke-width="1.15"/><line x1="557.30" y1="333.30" x2="550.00" y2="333.30" stroke="#2b2e35" stroke-width="1.15"/><line x1="559.04" y1="326.80" x2="552.72" y2="323.15" stroke="#2b2e35" stroke-width="1.15"/><line x1="563.80" y1="322.04" x2="560.15" y2="315.72" stroke="#2b2e35" stroke-width="1.15"/><line x1="570.30" y1="320.30" x2="570.30" y2="313.00" stroke="#2b2e35" stroke-width="1.15"/><line x1="576.80" y1="322.04" x2="580.45" y2="315.72" stroke="#2b2e35" stroke-width="1.15"/><line x1="581.56" y1="326.80" x2="587.88" y2="323.15" stroke="#2b2e35" stroke-width="1.15"/><line x1="583.30" y1="333.30" x2="590.60" y2="333.30" stroke="#2b2e35" stroke-width="1.15"/><line x1="581.56" y1="339.80" x2="587.88" y2="343.45" stroke="#2b2e35" stroke-width="1.15"/><line x1="576.80" y1="344.56" x2="580.45" y2="350.88" stroke="#2b2e35" stroke-width="1.15"/><circle cx="571.0999999999999" cy="334.3" r="14.85" fill="#353840" opacity="0.8"/><circle cx="570.3" cy="333.3" r="14.25" fill="url(#kg)" stroke="#b2bccb" stroke-width="0.7"/><circle cx="561.25" cy="332.35" r="3.3" fill="#474b55" stroke="#d5dce6" stroke-width="1.0"/><rect x="544.5" y="354.8" width="51.0" height="16.0" rx="3" fill="#363941"/><rect x="545.1" y="355.40000000000003" width="36.9" height="14.8" rx="2.5" fill="#3c4049"/><path d="M582.0,355.40000000000003 H592.4 Q594.9,355.40000000000003 594.9,357.90000000000003 V367.70000000000005 Q594.9,370.20000000000005 592.4,370.20000000000005 H582.0 Z" fill="#686e7a"/><path d="M582.5,370.20000000000005 V355.90000000000003 H592.4 Q594.4,355.90000000000003 594.4,357.90000000000003 V367.70000000000005" fill="none" stroke="#7c828e" stroke-width="1"/><path d="M584.75,362.1 L591.55,362.1 L588.15,358.3 Z" fill="#a0a8b5"/><path d="M584.75,363.3 L591.55,363.3 L588.15,367.2 Z" fill="#a0a8b5"/><text x="563.2" y="366.2" font-size="11" text-anchor="middle" fill="#dbe3ee" font-weight="normal" >22.0</text><circle cx="610.6" cy="362" r="4.9" fill="#3d4048" opacity="0.6"/><circle cx="610.6" cy="362" r="4.4" fill="url(#loff)"/><circle cx="608.8000000000001" cy="360.1" r="1.9" fill="url(#lhi)"/><text x="619.4" y="366" font-size="11" text-anchor="start" fill="#c9d2de" font-weight="normal" >Sync</text><text x="688.3" y="309.8" font-size="10.8" text-anchor="middle" fill="#c9d2de" font-weight="normal" >Sweep</text><line x1="681.80" y1="344.56" x2="678.15" y2="350.88" stroke="#2b2e35" stroke-width="1.15"/><line x1="677.04" y1="339.80" x2="670.72" y2="343.45" stroke="#2b2e35" stroke-width="1.15"/><line x1="675.30" y1="333.30" x2="668.00" y2="333.30" stroke="#2b2e35" stroke-width="1.15"/><line x1="677.04" y1="326.80" x2="670.72" y2="323.15" stroke="#2b2e35" stroke-width="1.15"/><line x1="681.80" y1="322.04" x2="678.15" y2="315.72" stroke="#2b2e35" stroke-width="1.15"/><line x1="688.30" y1="320.30" x2="688.30" y2="313.00" stroke="#2b2e35" stroke-width="1.15"/><line x1="694.80" y1="322.04" x2="698.45" y2="315.72" stroke="#2b2e35" stroke-width="1.15"/><line x1="699.56" y1="326.80" x2="705.88" y2="323.15" stroke="#2b2e35" stroke-width="1.15"/><line x1="701.30" y1="333.30" x2="708.60" y2="333.30" stroke="#2b2e35" stroke-width="1.15"/><line x1="699.56" y1="339.80" x2="705.88" y2="343.45" stroke="#2b2e35" stroke-width="1.15"/><line x1="694.80" y1="344.56" x2="698.45" y2="350.88" stroke="#2b2e35" stroke-width="1.15"/><circle cx="689.0999999999999" cy="334.3" r="14.85" fill="#353840" opacity="0.8"/><circle cx="688.3" cy="333.3" r="14.25" fill="url(#kg)" stroke="#b2bccb" stroke-width="0.7"/><circle cx="697.40" cy="333.06" r="3.3" fill="#474b55" stroke="#d5dce6" stroke-width="1.0"/><rect x="662.5" y="354.8" width="51.0" height="16.0" rx="3" fill="#363941"/><rect x="663.1" y="355.40000000000003" width="36.9" height="14.8" rx="2.5" fill="#3c4049"/><path d="M700.0,355.40000000000003 H710.4 Q712.9,355.40000000000003 712.9,357.90000000000003 V367.70000000000005 Q712.9,370.20000000000005 710.4,370.20000000000005 H700.0 Z" fill="#686e7a"/><path d="M700.5,370.20000000000005 V355.90000000000003 H710.4 Q712.4,355.90000000000003 712.4,357.90000000000003 V367.70000000000005" fill="none" stroke="#7c828e" stroke-width="1"/><path d="M702.75,362.1 L709.55,362.1 L706.15,358.3 Z" fill="#a0a8b5"/><path d="M702.75,363.3 L709.55,363.3 L706.15,367.2 Z" fill="#a0a8b5"/><text x="681.2" y="366.2" font-size="11" text-anchor="middle" fill="#dbe3ee" font-weight="normal" >59.0</text><text x="748.3" y="309.8" font-size="10.8" text-anchor="middle" fill="#c9d2de" font-weight="normal" >Pitch</text><line x1="741.80" y1="344.56" x2="738.15" y2="350.88" stroke="#2b2e35" stroke-width="1.15"/><line x1="737.04" y1="339.80" x2="730.72" y2="343.45" stroke="#2b2e35" stroke-width="1.15"/><line x1="735.30" y1="333.30" x2="728.00" y2="333.30" stroke="#2b2e35" stroke-width="1.15"/><line x1="737.04" y1="326.80" x2="730.72" y2="323.15" stroke="#2b2e35" stroke-width="1.15"/><line x1="741.80" y1="322.04" x2="738.15" y2="315.72" stroke="#2b2e35" stroke-width="1.15"/><line x1="748.30" y1="320.30" x2="748.30" y2="313.00" stroke="#2b2e35" stroke-width="1.15"/><line x1="754.80" y1="322.04" x2="758.45" y2="315.72" stroke="#2b2e35" stroke-width="1.15"/><line x1="759.56" y1="326.80" x2="765.88" y2="323.15" stroke="#2b2e35" stroke-width="1.15"/><line x1="761.30" y1="333.30" x2="768.60" y2="333.30" stroke="#2b2e35" stroke-width="1.15"/><line x1="759.56" y1="339.80" x2="765.88" y2="343.45" stroke="#2b2e35" stroke-width="1.15"/><line x1="754.80" y1="344.56" x2="758.45" y2="350.88" stroke="#2b2e35" stroke-width="1.15"/><circle cx="749.0999999999999" cy="334.3" r="14.85" fill="#353840" opacity="0.8"/><circle cx="748.3" cy="333.3" r="14.25" fill="url(#kg)" stroke="#b2bccb" stroke-width="0.7"/><circle cx="748.30" cy="324.20" r="3.3" fill="#474b55" stroke="#d5dce6" stroke-width="1.0"/><rect x="722.5" y="354.8" width="51.0" height="16.0" rx="3" fill="#363941"/><rect x="723.1" y="355.40000000000003" width="36.9" height="14.8" rx="2.5" fill="#3c4049"/><path d="M760.0,355.40000000000003 H770.4 Q772.9,355.40000000000003 772.9,357.90000000000003 V367.70000000000005 Q772.9,370.20000000000005 770.4,370.20000000000005 H760.0 Z" fill="#686e7a"/><path d="M760.5,370.20000000000005 V355.90000000000003 H770.4 Q772.4,355.90000000000003 772.4,357.90000000000003 V367.70000000000005" fill="none" stroke="#7c828e" stroke-width="1"/><path d="M762.75,362.1 L769.55,362.1 L766.15,358.3 Z" fill="#a0a8b5"/><path d="M762.75,363.3 L769.55,363.3 L766.15,367.2 Z" fill="#a0a8b5"/><text x="741.2" y="366.2" font-size="11" text-anchor="middle" fill="#dbe3ee" font-weight="normal" >0.0</text><text x="808.3" y="309.8" font-size="10.8" text-anchor="middle" fill="#c9d2de" font-weight="normal" >Balance</text><line x1="801.80" y1="344.56" x2="798.15" y2="350.88" stroke="#2b2e35" stroke-width="1.15"/><line x1="797.04" y1="339.80" x2="790.72" y2="343.45" stroke="#2b2e35" stroke-width="1.15"/><line x1="795.30" y1="333.30" x2="788.00" y2="333.30" stroke="#2b2e35" stroke-width="1.15"/><line x1="797.04" y1="326.80" x2="790.72" y2="323.15" stroke="#2b2e35" stroke-width="1.15"/><line x1="801.80" y1="322.04" x2="798.15" y2="315.72" stroke="#2b2e35" stroke-width="1.15"/><line x1="808.30" y1="320.30" x2="808.30" y2="313.00" stroke="#2b2e35" stroke-width="1.15"/><line x1="814.80" y1="322.04" x2="818.45" y2="315.72" stroke="#2b2e35" stroke-width="1.15"/><line x1="819.56" y1="326.80" x2="825.88" y2="323.15" stroke="#2b2e35" stroke-width="1.15"/><line x1="821.30" y1="333.30" x2="828.60" y2="333.30" stroke="#2b2e35" stroke-width="1.15"/><line x1="819.56" y1="339.80" x2="825.88" y2="343.45" stroke="#2b2e35" stroke-width="1.15"/><line x1="814.80" y1="344.56" x2="818.45" y2="350.88" stroke="#2b2e35" stroke-width="1.15"/><circle cx="809.0999999999999" cy="334.3" r="14.85" fill="#353840" opacity="0.8"/><circle cx="808.3" cy="333.3" r="14.25" fill="url(#kg)" stroke="#b2bccb" stroke-width="0.7"/><circle cx="808.30" cy="324.20" r="3.3" fill="#474b55" stroke="#d5dce6" stroke-width="1.0"/><rect x="782.5" y="354.8" width="51.0" height="16.0" rx="3" fill="#363941"/><rect x="783.1" y="355.40000000000003" width="36.9" height="14.8" rx="2.5" fill="#3c4049"/><path d="M820.0,355.40000000000003 H830.4 Q832.9,355.40000000000003 832.9,357.90000000000003 V367.70000000000005 Q832.9,370.20000000000005 830.4,370.20000000000005 H820.0 Z" fill="#686e7a"/><path d="M820.5,370.20000000000005 V355.90000000000003 H830.4 Q832.4,355.90000000000003 832.4,357.90000000000003 V367.70000000000005" fill="none" stroke="#7c828e" stroke-width="1"/><path d="M822.75,362.1 L829.55,362.1 L826.15,358.3 Z" fill="#a0a8b5"/><path d="M822.75,363.3 L829.55,363.3 L826.15,367.2 Z" fill="#a0a8b5"/><text x="801.2" y="366.2" font-size="11" text-anchor="middle" fill="#dbe3ee" font-weight="normal" >0.0</text><text x="868.3" y="309.8" font-size="10.8" text-anchor="middle" fill="#c9d2de" font-weight="normal" >Ring Mod</text><line x1="861.80" y1="344.56" x2="858.15" y2="350.88" stroke="#2b2e35" stroke-width="1.15"/><line x1="857.04" y1="339.80" x2="850.72" y2="343.45" stroke="#2b2e35" stroke-width="1.15"/><line x1="855.30" y1="333.30" x2="848.00" y2="333.30" stroke="#2b2e35" stroke-width="1.15"/><line x1="857.04" y1="326.80" x2="850.72" y2="323.15" stroke="#2b2e35" stroke-width="1.15"/><line x1="861.80" y1="322.04" x2="858.15" y2="315.72" stroke="#2b2e35" stroke-width="1.15"/><line x1="868.30" y1="320.30" x2="868.30" y2="313.00" stroke="#2b2e35" stroke-width="1.15"/><line x1="874.80" y1="322.04" x2="878.45" y2="315.72" stroke="#2b2e35" stroke-width="1.15"/><line x1="879.56" y1="326.80" x2="885.88" y2="323.15" stroke="#2b2e35" stroke-width="1.15"/><line x1="881.30" y1="333.30" x2="888.60" y2="333.30" stroke="#2b2e35" stroke-width="1.15"/><line x1="879.56" y1="339.80" x2="885.88" y2="343.45" stroke="#2b2e35" stroke-width="1.15"/><line x1="874.80" y1="344.56" x2="878.45" y2="350.88" stroke="#2b2e35" stroke-width="1.15"/><circle cx="869.0999999999999" cy="334.3" r="14.85" fill="#353840" opacity="0.8"/><circle cx="868.3" cy="333.3" r="14.25" fill="url(#kg)" stroke="#b2bccb" stroke-width="0.7"/><circle cx="868.30" cy="324.20" r="3.3" fill="#474b55" stroke="#d5dce6" stroke-width="1.0"/><rect x="842.5" y="354.8" width="51.0" height="16.0" rx="3" fill="#363941"/><rect x="843.1" y="355.40000000000003" width="36.9" height="14.8" rx="2.5" fill="#3c4049"/><path d="M880.0,355.40000000000003 H890.4 Q892.9,355.40000000000003 892.9,357.90000000000003 V367.70000000000005 Q892.9,370.20000000000005 890.4,370.20000000000005 H880.0 Z" fill="#686e7a"/><path d="M880.5,370.20000000000005 V355.90000000000003 H890.4 Q892.4,355.90000000000003 892.4,357.90000000000003 V367.70000000000005" fill="none" stroke="#7c828e" stroke-width="1"/><path d="M882.75,362.1 L889.55,362.1 L886.15,358.3 Z" fill="#a0a8b5"/><path d="M882.75,363.3 L889.55,363.3 L886.15,367.2 Z" fill="#a0a8b5"/><text x="861.2" y="366.2" font-size="11" text-anchor="middle" fill="#dbe3ee" font-weight="normal" >0.0</text><text x="928.3" y="309.8" font-size="10.8" text-anchor="middle" fill="#c9d2de" font-weight="normal" >Cutoff</text><line x1="921.80" y1="344.56" x2="918.15" y2="350.88" stroke="#2b2e35" stroke-width="1.15"/><line x1="917.04" y1="339.80" x2="910.72" y2="343.45" stroke="#2b2e35" stroke-width="1.15"/><line x1="915.30" y1="333.30" x2="908.00" y2="333.30" stroke="#2b2e35" stroke-width="1.15"/><line x1="917.04" y1="326.80" x2="910.72" y2="323.15" stroke="#2b2e35" stroke-width="1.15"/><line x1="921.80" y1="322.04" x2="918.15" y2="315.72" stroke="#2b2e35" stroke-width="1.15"/><line x1="928.30" y1="320.30" x2="928.30" y2="313.00" stroke="#2b2e35" stroke-width="1.15"/><line x1="934.80" y1="322.04" x2="938.45" y2="315.72" stroke="#2b2e35" stroke-width="1.15"/><line x1="939.56" y1="326.80" x2="945.88" y2="323.15" stroke="#2b2e35" stroke-width="1.15"/><line x1="941.30" y1="333.30" x2="948.60" y2="333.30" stroke="#2b2e35" stroke-width="1.15"/><line x1="939.56" y1="339.80" x2="945.88" y2="343.45" stroke="#2b2e35" stroke-width="1.15"/><line x1="934.80" y1="344.56" x2="938.45" y2="350.88" stroke="#2b2e35" stroke-width="1.15"/><circle cx="929.0999999999999" cy="334.3" r="14.85" fill="#353840" opacity="0.8"/><circle cx="928.3" cy="333.3" r="14.25" fill="url(#kg)" stroke="#b2bccb" stroke-width="0.7"/><circle cx="936.61" cy="329.60" r="3.3" fill="#474b55" stroke="#d5dce6" stroke-width="1.0"/><rect x="902.5" y="354.8" width="51.0" height="16.0" rx="3" fill="#363941"/><rect x="903.1" y="355.40000000000003" width="36.9" height="14.8" rx="2.5" fill="#3c4049"/><path d="M940.0,355.40000000000003 H950.4 Q952.9,355.40000000000003 952.9,357.90000000000003 V367.70000000000005 Q952.9,370.20000000000005 950.4,370.20000000000005 H940.0 Z" fill="#686e7a"/><path d="M940.5,370.20000000000005 V355.90000000000003 H950.4 Q952.4,355.90000000000003 952.4,357.90000000000003 V367.70000000000005" fill="none" stroke="#7c828e" stroke-width="1"/><path d="M942.75,362.1 L949.55,362.1 L946.15,358.3 Z" fill="#a0a8b5"/><path d="M942.75,363.3 L949.55,363.3 L946.15,367.2 Z" fill="#a0a8b5"/><text x="921.2" y="366.2" font-size="11" text-anchor="middle" fill="#dbe3ee" font-weight="normal" >44.0</text><text x="988.3" y="309.8" font-size="10.8" text-anchor="middle" fill="#c9d2de" font-weight="normal" >Reso</text><line x1="981.80" y1="344.56" x2="978.15" y2="350.88" stroke="#2b2e35" stroke-width="1.15"/><line x1="977.04" y1="339.80" x2="970.72" y2="343.45" stroke="#2b2e35" stroke-width="1.15"/><line x1="975.30" y1="333.30" x2="968.00" y2="333.30" stroke="#2b2e35" stroke-width="1.15"/><line x1="977.04" y1="326.80" x2="970.72" y2="323.15" stroke="#2b2e35" stroke-width="1.15"/><line x1="981.80" y1="322.04" x2="978.15" y2="315.72" stroke="#2b2e35" stroke-width="1.15"/><line x1="988.30" y1="320.30" x2="988.30" y2="313.00" stroke="#2b2e35" stroke-width="1.15"/><line x1="994.80" y1="322.04" x2="998.45" y2="315.72" stroke="#2b2e35" stroke-width="1.15"/><line x1="999.56" y1="326.80" x2="1005.88" y2="323.15" stroke="#2b2e35" stroke-width="1.15"/><line x1="1001.30" y1="333.30" x2="1008.60" y2="333.30" stroke="#2b2e35" stroke-width="1.15"/><line x1="999.56" y1="339.80" x2="1005.88" y2="343.45" stroke="#2b2e35" stroke-width="1.15"/><line x1="994.80" y1="344.56" x2="998.45" y2="350.88" stroke="#2b2e35" stroke-width="1.15"/><circle cx="989.0999999999999" cy="334.3" r="14.85" fill="#353840" opacity="0.8"/><circle cx="988.3" cy="333.3" r="14.25" fill="url(#kg)" stroke="#b2bccb" stroke-width="0.7"/><circle cx="988.30" cy="324.20" r="3.3" fill="#474b55" stroke="#d5dce6" stroke-width="1.0"/><rect x="962.5" y="354.8" width="51.0" height="16.0" rx="3" fill="#363941"/><rect x="963.1" y="355.40000000000003" width="36.9" height="14.8" rx="2.5" fill="#3c4049"/><path d="M1000.0,355.40000000000003 H1010.4 Q1012.9,355.40000000000003 1012.9,357.90000000000003 V367.70000000000005 Q1012.9,370.20000000000005 1010.4,370.20000000000005 H1000.0 Z" fill="#686e7a"/><path d="M1000.5,370.20000000000005 V355.90000000000003 H1010.4 Q1012.4,355.90000000000003 1012.4,357.90000000000003 V367.70000000000005" fill="none" stroke="#7c828e" stroke-width="1"/><path d="M1002.75,362.1 L1009.55,362.1 L1006.15,358.3 Z" fill="#a0a8b5"/><path d="M1002.75,363.3 L1009.55,363.3 L1006.15,367.2 Z" fill="#a0a8b5"/><text x="981.2" y="366.2" font-size="11" text-anchor="middle" fill="#dbe3ee" font-weight="normal" >0.0</text><text x="1048.3" y="309.8" font-size="10.8" text-anchor="middle" fill="#c9d2de" font-weight="normal" >Panning</text><line x1="1041.80" y1="344.56" x2="1038.15" y2="350.88" stroke="#2b2e35" stroke-width="1.15"/><line x1="1037.04" y1="339.80" x2="1030.72" y2="343.45" stroke="#2b2e35" stroke-width="1.15"/><line x1="1035.30" y1="333.30" x2="1028.00" y2="333.30" stroke="#2b2e35" stroke-width="1.15"/><line x1="1037.04" y1="326.80" x2="1030.72" y2="323.15" stroke="#2b2e35" stroke-width="1.15"/><line x1="1041.80" y1="322.04" x2="1038.15" y2="315.72" stroke="#2b2e35" stroke-width="1.15"/><line x1="1048.30" y1="320.30" x2="1048.30" y2="313.00" stroke="#2b2e35" stroke-width="1.15"/><line x1="1054.80" y1="322.04" x2="1058.45" y2="315.72" stroke="#2b2e35" stroke-width="1.15"/><line x1="1059.56" y1="326.80" x2="1065.88" y2="323.15" stroke="#2b2e35" stroke-width="1.15"/><line x1="1061.30" y1="333.30" x2="1068.60" y2="333.30" stroke="#2b2e35" stroke-width="1.15"/><line x1="1059.56" y1="339.80" x2="1065.88" y2="343.45" stroke="#2b2e35" stroke-width="1.15"/><line x1="1054.80" y1="344.56" x2="1058.45" y2="350.88" stroke="#2b2e35" stroke-width="1.15"/><circle cx="1049.1" cy="334.3" r="14.85" fill="#353840" opacity="0.8"/><circle cx="1048.3" cy="333.3" r="14.25" fill="url(#kg)" stroke="#b2bccb" stroke-width="0.7"/><circle cx="1039.51" cy="330.94" r="3.3" fill="#474b55" stroke="#d5dce6" stroke-width="1.0"/><rect x="1022.5" y="354.8" width="51.0" height="16.0" rx="3" fill="#363941"/><rect x="1023.1" y="355.40000000000003" width="36.9" height="14.8" rx="2.5" fill="#403d08"/><path d="M1060.0,355.40000000000003 H1070.4 Q1072.9,355.40000000000003 1072.9,357.90000000000003 V367.70000000000005 Q1072.9,370.20000000000005 1070.4,370.20000000000005 H1060.0 Z" fill="#686e7a"/><path d="M1060.5,370.20000000000005 V355.90000000000003 H1070.4 Q1072.4,355.90000000000003 1072.4,357.90000000000003 V367.70000000000005" fill="none" stroke="#7c828e" stroke-width="1"/><path d="M1062.75,362.1 L1069.5500000000002,362.1 L1066.15,358.3 Z" fill="#a0a8b5"/><path d="M1062.75,363.3 L1069.5500000000002,363.3 L1066.15,367.2 Z" fill="#a0a8b5"/><text x="1041.2" y="366.2" font-size="11" text-anchor="middle" fill="#dbe3ee" font-weight="normal" >-50.0</text><text x="1108.3" y="309.8" font-size="10.8" text-anchor="middle" fill="#c9d2de" font-weight="normal" >Volume</text><line x1="1101.80" y1="344.56" x2="1098.15" y2="350.88" stroke="#2b2e35" stroke-width="1.15"/><line x1="1097.04" y1="339.80" x2="1090.72" y2="343.45" stroke="#2b2e35" stroke-width="1.15"/><line x1="1095.30" y1="333.30" x2="1088.00" y2="333.30" stroke="#2b2e35" stroke-width="1.15"/><line x1="1097.04" y1="326.80" x2="1090.72" y2="323.15" stroke="#2b2e35" stroke-width="1.15"/><line x1="1101.80" y1="322.04" x2="1098.15" y2="315.72" stroke="#2b2e35" stroke-width="1.15"/><line x1="1108.30" y1="320.30" x2="1108.30" y2="313.00" stroke="#2b2e35" stroke-width="1.15"/><line x1="1114.80" y1="322.04" x2="1118.45" y2="315.72" stroke="#2b2e35" stroke-width="1.15"/><line x1="1119.56" y1="326.80" x2="1125.88" y2="323.15" stroke="#2b2e35" stroke-width="1.15"/><line x1="1121.30" y1="333.30" x2="1128.60" y2="333.30" stroke="#2b2e35" stroke-width="1.15"/><line x1="1119.56" y1="339.80" x2="1125.88" y2="343.45" stroke="#2b2e35" stroke-width="1.15"/><line x1="1114.80" y1="344.56" x2="1118.45" y2="350.88" stroke="#2b2e35" stroke-width="1.15"/><circle cx="1109.1" cy="334.3" r="14.85" fill="#353840" opacity="0.8"/><circle cx="1108.3" cy="333.3" r="14.25" fill="url(#kg)" stroke="#b2bccb" stroke-width="0.7"/><circle cx="1108.30" cy="324.20" r="3.3" fill="#474b55" stroke="#d5dce6" stroke-width="1.0"/><rect x="1082.5" y="354.8" width="51.0" height="16.0" rx="3" fill="#363941"/><rect x="1083.1" y="355.40000000000003" width="36.9" height="14.8" rx="2.5" fill="#3c4049"/><path d="M1120.0,355.40000000000003 H1130.4 Q1132.9,355.40000000000003 1132.9,357.90000000000003 V367.70000000000005 Q1132.9,370.20000000000005 1130.4,370.20000000000005 H1120.0 Z" fill="#686e7a"/><path d="M1120.5,370.20000000000005 V355.90000000000003 H1130.4 Q1132.4,355.90000000000003 1132.4,357.90000000000003 V367.70000000000005" fill="none" stroke="#7c828e" stroke-width="1"/><path d="M1122.75,362.1 L1129.5500000000002,362.1 L1126.15,358.3 Z" fill="#a0a8b5"/><path d="M1122.75,363.3 L1129.5500000000002,363.3 L1126.15,367.2 Z" fill="#a0a8b5"/><text x="1101.2" y="366.2" font-size="11" text-anchor="middle" fill="#dbe3ee" font-weight="normal" >0.0</text><text x="60.3" y="429.5" font-size="10.8" text-anchor="middle" fill="#c9d2de" font-weight="normal" >Volume</text><line x1="53.80" y1="464.26" x2="50.15" y2="470.58" stroke="#2b2e35" stroke-width="1.15"/><line x1="49.04" y1="459.50" x2="42.72" y2="463.15" stroke="#2b2e35" stroke-width="1.15"/><line x1="47.30" y1="453.00" x2="40.00" y2="453.00" stroke="#2b2e35" stroke-width="1.15"/><line x1="49.04" y1="446.50" x2="42.72" y2="442.85" stroke="#2b2e35" stroke-width="1.15"/><line x1="53.80" y1="441.74" x2="50.15" y2="435.42" stroke="#2b2e35" stroke-width="1.15"/><line x1="60.30" y1="440.00" x2="60.30" y2="432.70" stroke="#2b2e35" stroke-width="1.15"/><line x1="66.80" y1="441.74" x2="70.45" y2="435.42" stroke="#2b2e35" stroke-width="1.15"/><line x1="71.56" y1="446.50" x2="77.88" y2="442.85" stroke="#2b2e35" stroke-width="1.15"/><line x1="73.30" y1="453.00" x2="80.60" y2="453.00" stroke="#2b2e35" stroke-width="1.15"/><line x1="71.56" y1="459.50" x2="77.88" y2="463.15" stroke="#2b2e35" stroke-width="1.15"/><line x1="66.80" y1="464.26" x2="70.45" y2="470.58" stroke="#2b2e35" stroke-width="1.15"/><circle cx="61.099999999999994" cy="454.0" r="14.85" fill="#353840" opacity="0.8"/><circle cx="60.3" cy="453" r="14.25" fill="url(#kg)" stroke="#b2bccb" stroke-width="0.7"/><circle cx="60.30" cy="443.90" r="3.3" fill="#474b55" stroke="#d5dce6" stroke-width="1.0"/><rect x="34.5" y="474.5" width="51.0" height="16.0" rx="3" fill="#363941"/><rect x="35.1" y="475.1" width="36.9" height="14.8" rx="2.5" fill="#3c4049"/><path d="M72.0,475.1 H82.4 Q84.9,475.1 84.9,477.6 V487.40000000000003 Q84.9,489.90000000000003 82.4,489.90000000000003 H72.0 Z" fill="#686e7a"/><path d="M72.5,489.90000000000003 V475.6 H82.4 Q84.4,475.6 84.4,477.6 V487.40000000000003" fill="none" stroke="#7c828e" stroke-width="1"/><path d="M74.75,481.8 L81.55000000000001,481.8 L78.15,478.0 Z" fill="#a0a8b5"/><path d="M74.75,483.0 L81.55000000000001,483.0 L78.15,486.9 Z" fill="#a0a8b5"/><text x="53.2" y="485.9" font-size="11" text-anchor="middle" fill="#dbe3ee" font-weight="normal" >50.0</text><rect x="94" y="420" width="120" height="72" fill="#2b2d34"/><rect x="94" y="420" width="120" height="1" fill="#2d2f3a"/><rect x="94" y="420" width="1" height="72" fill="#2d2f3a"/><rect x="94" y="491" width="120" height="1" fill="#6c7281"/><rect x="213" y="420" width="1" height="72" fill="#6c7281"/><path d="M99.75,491 L99.75,485.9 L105,425.7 L131.8,437.9 L159,437.9 L168.8,485.9 L168.8,491 Z" fill="url(#olv)"/><path d="M99.75,485.9 L105,425.7 L131.8,437.9 L159,437.9 L168.8,485.9" fill="none" stroke="#b4b8c0" stroke-width="1"/><rect x="96.0" y="482.15" width="7.5" height="7.5" fill="#3b3f49" stroke="#a4a68c" stroke-width="1"/><rect x="101.25" y="421.95" width="7.5" height="7.5" fill="#7d7900" stroke="#a4a68c" stroke-width="1"/><rect x="128.05" y="434.15" width="7.5" height="7.5" fill="#7d7900" stroke="#a4a68c" stroke-width="1"/><rect x="155.25" y="434.15" width="7.5" height="7.5" fill="#7d7900" stroke="#a4a68c" stroke-width="1"/><rect x="165.05" y="482.15" width="7.5" height="7.5" fill="#7d7900" stroke="#a4a68c" stroke-width="1"/><text x="248.3" y="429.5" font-size="10.8" text-anchor="middle" fill="#c9d2de" font-weight="normal" >Attack</text><line x1="241.80" y1="464.26" x2="238.15" y2="470.58" stroke="#2b2e35" stroke-width="1.15"/><line x1="237.04" y1="459.50" x2="230.72" y2="463.15" stroke="#2b2e35" stroke-width="1.15"/><line x1="235.30" y1="453.00" x2="228.00" y2="453.00" stroke="#2b2e35" stroke-width="1.15"/><line x1="237.04" y1="446.50" x2="230.72" y2="442.85" stroke="#2b2e35" stroke-width="1.15"/><line x1="241.80" y1="441.74" x2="238.15" y2="435.42" stroke="#2b2e35" stroke-width="1.15"/><line x1="248.30" y1="440.00" x2="248.30" y2="432.70" stroke="#2b2e35" stroke-width="1.15"/><line x1="254.80" y1="441.74" x2="258.45" y2="435.42" stroke="#2b2e35" stroke-width="1.15"/><line x1="259.56" y1="446.50" x2="265.88" y2="442.85" stroke="#2b2e35" stroke-width="1.15"/><line x1="261.30" y1="453.00" x2="268.60" y2="453.00" stroke="#2b2e35" stroke-width="1.15"/><line x1="259.56" y1="459.50" x2="265.88" y2="463.15" stroke="#2b2e35" stroke-width="1.15"/><line x1="254.80" y1="464.26" x2="258.45" y2="470.58" stroke="#2b2e35" stroke-width="1.15"/><circle cx="249.10000000000002" cy="454.0" r="14.85" fill="#353840" opacity="0.8"/><circle cx="248.3" cy="453" r="14.25" fill="url(#kg)" stroke="#b2bccb" stroke-width="0.7"/><circle cx="239.20" cy="453.00" r="3.3" fill="#474b55" stroke="#d5dce6" stroke-width="1.0"/><rect x="222.5" y="474.5" width="51.0" height="16.0" rx="3" fill="#363941"/><rect x="223.1" y="475.1" width="36.9" height="14.8" rx="2.5" fill="#403d08"/><path d="M260.0,475.1 H270.4 Q272.9,475.1 272.9,477.6 V487.40000000000003 Q272.9,489.90000000000003 270.4,489.90000000000003 H260.0 Z" fill="#686e7a"/><path d="M260.5,489.90000000000003 V475.6 H270.4 Q272.4,475.6 272.4,477.6 V487.40000000000003" fill="none" stroke="#7c828e" stroke-width="1"/><path d="M262.75,481.8 L269.54999999999995,481.8 L266.15,478.0 Z" fill="#a0a8b5"/><path d="M262.75,483.0 L269.54999999999995,483.0 L266.15,486.9 Z" fill="#a0a8b5"/><text x="241.2" y="485.9" font-size="11" text-anchor="middle" fill="#dbe3ee" font-weight="normal" >20.0</text><text x="308.3" y="429.5" font-size="10.8" text-anchor="middle" fill="#c9d2de" font-weight="normal" >Decay</text><line x1="301.80" y1="464.26" x2="298.15" y2="470.58" stroke="#2b2e35" stroke-width="1.15"/><line x1="297.04" y1="459.50" x2="290.72" y2="463.15" stroke="#2b2e35" stroke-width="1.15"/><line x1="295.30" y1="453.00" x2="288.00" y2="453.00" stroke="#2b2e35" stroke-width="1.15"/><line x1="297.04" y1="446.50" x2="290.72" y2="442.85" stroke="#2b2e35" stroke-width="1.15"/><line x1="301.80" y1="441.74" x2="298.15" y2="435.42" stroke="#2b2e35" stroke-width="1.15"/><line x1="308.30" y1="440.00" x2="308.30" y2="432.70" stroke="#2b2e35" stroke-width="1.15"/><line x1="314.80" y1="441.74" x2="318.45" y2="435.42" stroke="#2b2e35" stroke-width="1.15"/><line x1="319.56" y1="446.50" x2="325.88" y2="442.85" stroke="#2b2e35" stroke-width="1.15"/><line x1="321.30" y1="453.00" x2="328.60" y2="453.00" stroke="#2b2e35" stroke-width="1.15"/><line x1="319.56" y1="459.50" x2="325.88" y2="463.15" stroke="#2b2e35" stroke-width="1.15"/><line x1="314.80" y1="464.26" x2="318.45" y2="470.58" stroke="#2b2e35" stroke-width="1.15"/><circle cx="309.1" cy="454.0" r="14.85" fill="#353840" opacity="0.8"/><circle cx="308.3" cy="453" r="14.25" fill="url(#kg)" stroke="#b2bccb" stroke-width="0.7"/><circle cx="312.85" cy="460.88" r="3.3" fill="#474b55" stroke="#d5dce6" stroke-width="1.0"/><rect x="282.5" y="474.5" width="51.0" height="16.0" rx="3" fill="#363941"/><rect x="283.1" y="475.1" width="36.9" height="14.8" rx="2.5" fill="#403d08"/><path d="M320.0,475.1 H330.4 Q332.9,475.1 332.9,477.6 V487.40000000000003 Q332.9,489.90000000000003 330.4,489.90000000000003 H320.0 Z" fill="#686e7a"/><path d="M320.5,489.90000000000003 V475.6 H330.4 Q332.4,475.6 332.4,477.6 V487.40000000000003" fill="none" stroke="#7c828e" stroke-width="1"/><path d="M322.75,481.8 L329.54999999999995,481.8 L326.15,478.0 Z" fill="#868c98"/><path d="M322.75,483.0 L329.54999999999995,483.0 L326.15,486.9 Z" fill="#a0a8b5"/><text x="301.2" y="485.9" font-size="11" text-anchor="middle" fill="#dbe3ee" font-weight="normal" >100.0</text><text x="368.3" y="429.5" font-size="10.8" text-anchor="middle" fill="#c9d2de" font-weight="normal" >Sustain</text><line x1="361.80" y1="464.26" x2="358.15" y2="470.58" stroke="#2b2e35" stroke-width="1.15"/><line x1="357.04" y1="459.50" x2="350.72" y2="463.15" stroke="#2b2e35" stroke-width="1.15"/><line x1="355.30" y1="453.00" x2="348.00" y2="453.00" stroke="#2b2e35" stroke-width="1.15"/><line x1="357.04" y1="446.50" x2="350.72" y2="442.85" stroke="#2b2e35" stroke-width="1.15"/><line x1="361.80" y1="441.74" x2="358.15" y2="435.42" stroke="#2b2e35" stroke-width="1.15"/><line x1="368.30" y1="440.00" x2="368.30" y2="432.70" stroke="#2b2e35" stroke-width="1.15"/><line x1="374.80" y1="441.74" x2="378.45" y2="435.42" stroke="#2b2e35" stroke-width="1.15"/><line x1="379.56" y1="446.50" x2="385.88" y2="442.85" stroke="#2b2e35" stroke-width="1.15"/><line x1="381.30" y1="453.00" x2="388.60" y2="453.00" stroke="#2b2e35" stroke-width="1.15"/><line x1="379.56" y1="459.50" x2="385.88" y2="463.15" stroke="#2b2e35" stroke-width="1.15"/><line x1="374.80" y1="464.26" x2="378.45" y2="470.58" stroke="#2b2e35" stroke-width="1.15"/><circle cx="369.1" cy="454.0" r="14.85" fill="#353840" opacity="0.8"/><circle cx="368.3" cy="453" r="14.25" fill="url(#kg)" stroke="#b2bccb" stroke-width="0.7"/><circle cx="377.40" cy="453.00" r="3.3" fill="#474b55" stroke="#d5dce6" stroke-width="1.0"/><rect x="342.5" y="474.5" width="51.0" height="16.0" rx="3" fill="#363941"/><rect x="343.1" y="475.1" width="36.9" height="14.8" rx="2.5" fill="#403d08"/><path d="M380.0,475.1 H390.4 Q392.9,475.1 392.9,477.6 V487.40000000000003 Q392.9,489.90000000000003 390.4,489.90000000000003 H380.0 Z" fill="#686e7a"/><path d="M380.5,489.90000000000003 V475.6 H390.4 Q392.4,475.6 392.4,477.6 V487.40000000000003" fill="none" stroke="#7c828e" stroke-width="1"/><path d="M382.75,481.8 L389.54999999999995,481.8 L386.15,478.0 Z" fill="#a0a8b5"/><path d="M382.75,483.0 L389.54999999999995,483.0 L386.15,486.9 Z" fill="#a0a8b5"/><text x="361.2" y="485.9" font-size="11" text-anchor="middle" fill="#dbe3ee" font-weight="normal" >80.0</text><text x="428.3" y="429.5" font-size="10.8" text-anchor="middle" fill="#c9d2de" font-weight="normal" >Release</text><line x1="421.80" y1="464.26" x2="418.15" y2="470.58" stroke="#2b2e35" stroke-width="1.15"/><line x1="417.04" y1="459.50" x2="410.72" y2="463.15" stroke="#2b2e35" stroke-width="1.15"/><line x1="415.30" y1="453.00" x2="408.00" y2="453.00" stroke="#2b2e35" stroke-width="1.15"/><line x1="417.04" y1="446.50" x2="410.72" y2="442.85" stroke="#2b2e35" stroke-width="1.15"/><line x1="421.80" y1="441.74" x2="418.15" y2="435.42" stroke="#2b2e35" stroke-width="1.15"/><line x1="428.30" y1="440.00" x2="428.30" y2="432.70" stroke="#2b2e35" stroke-width="1.15"/><line x1="434.80" y1="441.74" x2="438.45" y2="435.42" stroke="#2b2e35" stroke-width="1.15"/><line x1="439.56" y1="446.50" x2="445.88" y2="442.85" stroke="#2b2e35" stroke-width="1.15"/><line x1="441.30" y1="453.00" x2="448.60" y2="453.00" stroke="#2b2e35" stroke-width="1.15"/><line x1="439.56" y1="459.50" x2="445.88" y2="463.15" stroke="#2b2e35" stroke-width="1.15"/><line x1="434.80" y1="464.26" x2="438.45" y2="470.58" stroke="#2b2e35" stroke-width="1.15"/><circle cx="429.1" cy="454.0" r="14.85" fill="#353840" opacity="0.8"/><circle cx="428.3" cy="453" r="14.25" fill="url(#kg)" stroke="#b2bccb" stroke-width="0.7"/><circle cx="423.75" cy="445.12" r="3.3" fill="#474b55" stroke="#d5dce6" stroke-width="1.0"/><rect x="402.5" y="474.5" width="51.0" height="16.0" rx="3" fill="#363941"/><rect x="403.1" y="475.1" width="36.9" height="14.8" rx="2.5" fill="#3c4049"/><path d="M440.0,475.1 H450.4 Q452.9,475.1 452.9,477.6 V487.40000000000003 Q452.9,489.90000000000003 450.4,489.90000000000003 H440.0 Z" fill="#686e7a"/><path d="M440.5,489.90000000000003 V475.6 H450.4 Q452.4,475.6 452.4,477.6 V487.40000000000003" fill="none" stroke="#7c828e" stroke-width="1"/><path d="M442.75,481.8 L449.54999999999995,481.8 L446.15,478.0 Z" fill="#a0a8b5"/><path d="M442.75,483.0 L449.54999999999995,483.0 L446.15,486.9 Z" fill="#a0a8b5"/><text x="421.2" y="485.9" font-size="11" text-anchor="middle" fill="#dbe3ee" font-weight="normal" >40.0</text><text x="515.3" y="429.5" font-size="10.8" text-anchor="middle" fill="#c9d2de" font-weight="normal" >Pitchbend</text><line x1="508.80" y1="464.26" x2="505.15" y2="470.58" stroke="#2b2e35" stroke-width="1.15"/><line x1="504.04" y1="459.50" x2="497.72" y2="463.15" stroke="#2b2e35" stroke-width="1.15"/><line x1="502.30" y1="453.00" x2="495.00" y2="453.00" stroke="#2b2e35" stroke-width="1.15"/><line x1="504.04" y1="446.50" x2="497.72" y2="442.85" stroke="#2b2e35" stroke-width="1.15"/><line x1="508.80" y1="441.74" x2="505.15" y2="435.42" stroke="#2b2e35" stroke-width="1.15"/><line x1="515.30" y1="440.00" x2="515.30" y2="432.70" stroke="#2b2e35" stroke-width="1.15"/><line x1="521.80" y1="441.74" x2="525.45" y2="435.42" stroke="#2b2e35" stroke-width="1.15"/><line x1="526.56" y1="446.50" x2="532.88" y2="442.85" stroke="#2b2e35" stroke-width="1.15"/><line x1="528.30" y1="453.00" x2="535.60" y2="453.00" stroke="#2b2e35" stroke-width="1.15"/><line x1="526.56" y1="459.50" x2="532.88" y2="463.15" stroke="#2b2e35" stroke-width="1.15"/><line x1="521.80" y1="464.26" x2="525.45" y2="470.58" stroke="#2b2e35" stroke-width="1.15"/><circle cx="516.0999999999999" cy="454.0" r="14.85" fill="#353840" opacity="0.8"/><circle cx="515.3" cy="453" r="14.25" fill="url(#kg)" stroke="#b2bccb" stroke-width="0.7"/><circle cx="507.42" cy="448.45" r="3.3" fill="#474b55" stroke="#d5dce6" stroke-width="1.0"/><rect x="489.5" y="474.5" width="51.0" height="16.0" rx="3" fill="#363941"/><rect x="490.1" y="475.1" width="36.9" height="14.8" rx="2.5" fill="#3c4049"/><path d="M527.0,475.1 H537.4 Q539.9,475.1 539.9,477.6 V487.40000000000003 Q539.9,489.90000000000003 537.4,489.90000000000003 H527.0 Z" fill="#686e7a"/><path d="M527.5,489.90000000000003 V475.6 H537.4 Q539.4,475.6 539.4,477.6 V487.40000000000003" fill="none" stroke="#7c828e" stroke-width="1"/><path d="M529.75,481.8 L536.55,481.8 L533.15,478.0 Z" fill="#a0a8b5"/><path d="M529.75,483.0 L536.55,483.0 L533.15,486.9 Z" fill="#a0a8b5"/><text x="508.2" y="485.9" font-size="11" text-anchor="middle" fill="#dbe3ee" font-weight="normal" >30.0</text><text x="580.3" y="429.5" font-size="10.8" text-anchor="middle" fill="#c9d2de" font-weight="normal" >Modwheel</text><line x1="573.80" y1="464.26" x2="570.15" y2="470.58" stroke="#2b2e35" stroke-width="1.15"/><line x1="569.04" y1="459.50" x2="562.72" y2="463.15" stroke="#2b2e35" stroke-width="1.15"/><line x1="567.30" y1="453.00" x2="560.00" y2="453.00" stroke="#2b2e35" stroke-width="1.15"/><line x1="569.04" y1="446.50" x2="562.72" y2="442.85" stroke="#2b2e35" stroke-width="1.15"/><line x1="573.80" y1="441.74" x2="570.15" y2="435.42" stroke="#2b2e35" stroke-width="1.15"/><line x1="580.30" y1="440.00" x2="580.30" y2="432.70" stroke="#2b2e35" stroke-width="1.15"/><line x1="586.80" y1="441.74" x2="590.45" y2="435.42" stroke="#2b2e35" stroke-width="1.15"/><line x1="591.56" y1="446.50" x2="597.88" y2="442.85" stroke="#2b2e35" stroke-width="1.15"/><line x1="593.30" y1="453.00" x2="600.60" y2="453.00" stroke="#2b2e35" stroke-width="1.15"/><line x1="591.56" y1="459.50" x2="597.88" y2="463.15" stroke="#2b2e35" stroke-width="1.15"/><line x1="586.80" y1="464.26" x2="590.45" y2="470.58" stroke="#2b2e35" stroke-width="1.15"/><circle cx="581.0999999999999" cy="454.0" r="14.85" fill="#353840" opacity="0.8"/><circle cx="580.3" cy="453" r="14.25" fill="url(#kg)" stroke="#b2bccb" stroke-width="0.7"/><circle cx="571.20" cy="453.00" r="3.3" fill="#474b55" stroke="#d5dce6" stroke-width="1.0"/><rect x="554.5" y="474.5" width="51.0" height="16.0" rx="3" fill="#363941"/><rect x="555.1" y="475.1" width="36.9" height="14.8" rx="2.5" fill="#3c4049"/><path d="M592.0,475.1 H602.4 Q604.9,475.1 604.9,477.6 V487.40000000000003 Q604.9,489.90000000000003 602.4,489.90000000000003 H592.0 Z" fill="#686e7a"/><path d="M592.5,489.90000000000003 V475.6 H602.4 Q604.4,475.6 604.4,477.6 V487.40000000000003" fill="none" stroke="#7c828e" stroke-width="1"/><path d="M594.75,481.8 L601.55,481.8 L598.15,478.0 Z" fill="#a0a8b5"/><path d="M594.75,483.0 L601.55,483.0 L598.15,486.9 Z" fill="#a0a8b5"/><text x="573.2" y="485.9" font-size="11" text-anchor="middle" fill="#dbe3ee" font-weight="normal" >20.0</text><text x="645.3" y="429.5" font-size="10.8" text-anchor="middle" fill="#c9d2de" font-weight="normal" >Pressure</text><line x1="638.80" y1="464.26" x2="635.15" y2="470.58" stroke="#2b2e35" stroke-width="1.15"/><line x1="634.04" y1="459.50" x2="627.72" y2="463.15" stroke="#2b2e35" stroke-width="1.15"/><line x1="632.30" y1="453.00" x2="625.00" y2="453.00" stroke="#2b2e35" stroke-width="1.15"/><line x1="634.04" y1="446.50" x2="627.72" y2="442.85" stroke="#2b2e35" stroke-width="1.15"/><line x1="638.80" y1="441.74" x2="635.15" y2="435.42" stroke="#2b2e35" stroke-width="1.15"/><line x1="645.30" y1="440.00" x2="645.30" y2="432.70" stroke="#2b2e35" stroke-width="1.15"/><line x1="651.80" y1="441.74" x2="655.45" y2="435.42" stroke="#2b2e35" stroke-width="1.15"/><line x1="656.56" y1="446.50" x2="662.88" y2="442.85" stroke="#2b2e35" stroke-width="1.15"/><line x1="658.30" y1="453.00" x2="665.60" y2="453.00" stroke="#2b2e35" stroke-width="1.15"/><line x1="656.56" y1="459.50" x2="662.88" y2="463.15" stroke="#2b2e35" stroke-width="1.15"/><line x1="651.80" y1="464.26" x2="655.45" y2="470.58" stroke="#2b2e35" stroke-width="1.15"/><circle cx="646.0999999999999" cy="454.0" r="14.85" fill="#353840" opacity="0.8"/><circle cx="645.3" cy="453" r="14.25" fill="url(#kg)" stroke="#b2bccb" stroke-width="0.7"/><circle cx="645.30" cy="443.90" r="3.3" fill="#474b55" stroke="#d5dce6" stroke-width="1.0"/><rect x="619.5" y="474.5" width="51.0" height="16.0" rx="3" fill="#363941"/><rect x="620.1" y="475.1" width="36.9" height="14.8" rx="2.5" fill="#3c4049"/><path d="M657.0,475.1 H667.4 Q669.9,475.1 669.9,477.6 V487.40000000000003 Q669.9,489.90000000000003 667.4,489.90000000000003 H657.0 Z" fill="#686e7a"/><path d="M657.5,489.90000000000003 V475.6 H667.4 Q669.4,475.6 669.4,477.6 V487.40000000000003" fill="none" stroke="#7c828e" stroke-width="1"/><path d="M659.75,481.8 L666.55,481.8 L663.15,478.0 Z" fill="#a0a8b5"/><path d="M659.75,483.0 L666.55,483.0 L663.15,486.9 Z" fill="#a0a8b5"/><text x="638.2" y="485.9" font-size="11" text-anchor="middle" fill="#dbe3ee" font-weight="normal" >50.0</text><text x="710.3" y="429.5" font-size="10.8" text-anchor="middle" fill="#c9d2de" font-weight="normal" >Velocity</text><line x1="703.80" y1="464.26" x2="700.15" y2="470.58" stroke="#2b2e35" stroke-width="1.15"/><line x1="699.04" y1="459.50" x2="692.72" y2="463.15" stroke="#2b2e35" stroke-width="1.15"/><line x1="697.30" y1="453.00" x2="690.00" y2="453.00" stroke="#2b2e35" stroke-width="1.15"/><line x1="699.04" y1="446.50" x2="692.72" y2="442.85" stroke="#2b2e35" stroke-width="1.15"/><line x1="703.80" y1="441.74" x2="700.15" y2="435.42" stroke="#2b2e35" stroke-width="1.15"/><line x1="710.30" y1="440.00" x2="710.30" y2="432.70" stroke="#2b2e35" stroke-width="1.15"/><line x1="716.80" y1="441.74" x2="720.45" y2="435.42" stroke="#2b2e35" stroke-width="1.15"/><line x1="721.56" y1="446.50" x2="727.88" y2="442.85" stroke="#2b2e35" stroke-width="1.15"/><line x1="723.30" y1="453.00" x2="730.60" y2="453.00" stroke="#2b2e35" stroke-width="1.15"/><line x1="721.56" y1="459.50" x2="727.88" y2="463.15" stroke="#2b2e35" stroke-width="1.15"/><line x1="716.80" y1="464.26" x2="720.45" y2="470.58" stroke="#2b2e35" stroke-width="1.15"/><circle cx="711.0999999999999" cy="454.0" r="14.85" fill="#353840" opacity="0.8"/><circle cx="710.3" cy="453" r="14.25" fill="url(#kg)" stroke="#b2bccb" stroke-width="0.7"/><circle cx="701.20" cy="453.00" r="3.3" fill="#474b55" stroke="#d5dce6" stroke-width="1.0"/><rect x="684.5" y="474.5" width="51.0" height="16.0" rx="3" fill="#363941"/><rect x="685.1" y="475.1" width="36.9" height="14.8" rx="2.5" fill="#3c4049"/><path d="M722.0,475.1 H732.4 Q734.9,475.1 734.9,477.6 V487.40000000000003 Q734.9,489.90000000000003 732.4,489.90000000000003 H722.0 Z" fill="#686e7a"/><path d="M722.5,489.90000000000003 V475.6 H732.4 Q734.4,475.6 734.4,477.6 V487.40000000000003" fill="none" stroke="#7c828e" stroke-width="1"/><path d="M724.75,481.8 L731.55,481.8 L728.15,478.0 Z" fill="#a0a8b5"/><path d="M724.75,483.0 L731.55,483.0 L728.15,486.9 Z" fill="#a0a8b5"/><text x="703.2" y="485.9" font-size="11" text-anchor="middle" fill="#dbe3ee" font-weight="normal" >20.0</text><text x="775" y="429.5" font-size="10.8" text-anchor="middle" fill="#c9d2de" font-weight="normal" >Channel</text><line x1="768.80" y1="464.26" x2="765.50" y2="469.97" stroke="#2b2e35" stroke-width="0.95"/><line x1="765.53" y1="461.57" x2="760.56" y2="465.92" stroke="#2b2e35" stroke-width="0.95"/><line x1="763.29" y1="457.97" x2="757.19" y2="460.50" stroke="#2b2e35" stroke-width="0.95"/><line x1="762.33" y1="453.85" x2="755.74" y2="454.28" stroke="#2b2e35" stroke-width="0.95"/><line x1="762.74" y1="449.64" x2="756.37" y2="447.93" stroke="#2b2e35" stroke-width="0.95"/><line x1="764.49" y1="445.78" x2="759.00" y2="442.11" stroke="#2b2e35" stroke-width="0.95"/><line x1="767.39" y1="442.69" x2="763.37" y2="437.45" stroke="#2b2e35" stroke-width="0.95"/><line x1="771.12" y1="440.69" x2="769.00" y2="434.44" stroke="#2b2e35" stroke-width="0.95"/><line x1="775.30" y1="440.00" x2="775.30" y2="433.40" stroke="#2b2e35" stroke-width="0.95"/><line x1="779.48" y1="440.69" x2="781.60" y2="434.44" stroke="#2b2e35" stroke-width="0.95"/><line x1="783.21" y1="442.69" x2="787.23" y2="437.45" stroke="#2b2e35" stroke-width="0.95"/><line x1="786.11" y1="445.78" x2="791.60" y2="442.11" stroke="#2b2e35" stroke-width="0.95"/><line x1="787.86" y1="449.64" x2="794.23" y2="447.93" stroke="#2b2e35" stroke-width="0.95"/><line x1="788.27" y1="453.85" x2="794.86" y2="454.28" stroke="#2b2e35" stroke-width="0.95"/><line x1="787.31" y1="457.97" x2="793.41" y2="460.50" stroke="#2b2e35" stroke-width="0.95"/><line x1="785.07" y1="461.57" x2="790.04" y2="465.92" stroke="#2b2e35" stroke-width="0.95"/><line x1="781.80" y1="464.26" x2="785.10" y2="469.97" stroke="#2b2e35" stroke-width="0.95"/><circle cx="776.0999999999999" cy="454.0" r="14.85" fill="#353840" opacity="0.8"/><circle cx="775.3" cy="453" r="14.25" fill="url(#kg)" stroke="#b2bccb" stroke-width="0.7"/><circle cx="770.75" cy="460.88" r="3.3" fill="#474b55" stroke="#d5dce6" stroke-width="1.0"/><rect x="750.2" y="474.2" width="49.4" height="16.2" rx="3" fill="url(#bg)" stroke="#767c87" stroke-width="1"/><text x="754.4" y="486.6" font-size="10.6" text-anchor="start" fill="#dde6f0" font-weight="normal" >Omni</text><path d="M786,481 H792.6 L789.3,484.6 Z" fill="#a9b2c0"/><circle cx="821" cy="433.2" r="4.9" fill="#3d4048" opacity="0.6"/><circle cx="821" cy="433.2" r="4.4" fill="url(#lon)"/><text x="829.8" y="437.0" font-size="8.9" text-anchor="start" fill="#c9d2de" font-weight="normal" >Poly</text><circle cx="821" cy="455.2" r="4.9" fill="#3d4048" opacity="0.6"/><circle cx="821" cy="455.2" r="4.4" fill="url(#loff)"/><circle cx="819.2" cy="453.3" r="1.9" fill="url(#lhi)"/><text x="829.8" y="459.0" font-size="8.9" text-anchor="start" fill="#c9d2de" font-weight="normal" >Mono</text><circle cx="821" cy="477" r="4.9" fill="#3d4048" opacity="0.6"/><circle cx="821" cy="477" r="4.4" fill="url(#loff)"/><circle cx="819.2" cy="475.1" r="1.9" fill="url(#lhi)"/><text x="829.8" y="480.8" font-size="8.9" text-anchor="start" fill="#c9d2de" font-weight="normal" >Legato</text><text x="928.3" y="429.5" font-size="10.8" text-anchor="middle" fill="#c9d2de" font-weight="normal" >Width</text><line x1="921.80" y1="464.26" x2="918.15" y2="470.58" stroke="#2b2e35" stroke-width="1.15"/><line x1="917.04" y1="459.50" x2="910.72" y2="463.15" stroke="#2b2e35" stroke-width="1.15"/><line x1="915.30" y1="453.00" x2="908.00" y2="453.00" stroke="#2b2e35" stroke-width="1.15"/><line x1="917.04" y1="446.50" x2="910.72" y2="442.85" stroke="#2b2e35" stroke-width="1.15"/><line x1="921.80" y1="441.74" x2="918.15" y2="435.42" stroke="#2b2e35" stroke-width="1.15"/><line x1="928.30" y1="440.00" x2="928.30" y2="432.70" stroke="#2b2e35" stroke-width="1.15"/><line x1="934.80" y1="441.74" x2="938.45" y2="435.42" stroke="#2b2e35" stroke-width="1.15"/><line x1="939.56" y1="446.50" x2="945.88" y2="442.85" stroke="#2b2e35" stroke-width="1.15"/><line x1="941.30" y1="453.00" x2="948.60" y2="453.00" stroke="#2b2e35" stroke-width="1.15"/><line x1="939.56" y1="459.50" x2="945.88" y2="463.15" stroke="#2b2e35" stroke-width="1.15"/><line x1="934.80" y1="464.26" x2="938.45" y2="470.58" stroke="#2b2e35" stroke-width="1.15"/><circle cx="929.0999999999999" cy="454.0" r="14.85" fill="#353840" opacity="0.8"/><circle cx="928.3" cy="453" r="14.25" fill="url(#kg)" stroke="#b2bccb" stroke-width="0.7"/><circle cx="919.51" cy="450.64" r="3.3" fill="#474b55" stroke="#d5dce6" stroke-width="1.0"/><rect x="902.5" y="474.5" width="51.0" height="16.0" rx="3" fill="#363941"/><rect x="903.1" y="475.1" width="36.9" height="14.8" rx="2.5" fill="#403d08"/><path d="M940.0,475.1 H950.4 Q952.9,475.1 952.9,477.6 V487.40000000000003 Q952.9,489.90000000000003 950.4,489.90000000000003 H940.0 Z" fill="#686e7a"/><path d="M940.5,489.90000000000003 V475.6 H950.4 Q952.4,475.6 952.4,477.6 V487.40000000000003" fill="none" stroke="#7c828e" stroke-width="1"/><path d="M942.75,481.8 L949.55,481.8 L946.15,478.0 Z" fill="#a0a8b5"/><path d="M942.75,483.0 L949.55,483.0 L946.15,486.9 Z" fill="#a0a8b5"/><text x="921.2" y="485.9" font-size="11" text-anchor="middle" fill="#dbe3ee" font-weight="normal" >-50.0</text><rect x="902.5" y="474.5" width="51" height="16" rx="3" fill="none" stroke="#7886a0" stroke-width="1"/><rect x="924.1" y="476" width="0.9" height="13" fill="#d0d0ff"/><text x="988.3" y="429.5" font-size="10.8" text-anchor="middle" fill="#c9d2de" font-weight="normal" >Panning</text><line x1="981.80" y1="464.26" x2="978.15" y2="470.58" stroke="#2b2e35" stroke-width="1.15"/><line x1="977.04" y1="459.50" x2="970.72" y2="463.15" stroke="#2b2e35" stroke-width="1.15"/><line x1="975.30" y1="453.00" x2="968.00" y2="453.00" stroke="#2b2e35" stroke-width="1.15"/><line x1="977.04" y1="446.50" x2="970.72" y2="442.85" stroke="#2b2e35" stroke-width="1.15"/><line x1="981.80" y1="441.74" x2="978.15" y2="435.42" stroke="#2b2e35" stroke-width="1.15"/><line x1="988.30" y1="440.00" x2="988.30" y2="432.70" stroke="#2b2e35" stroke-width="1.15"/><line x1="994.80" y1="441.74" x2="998.45" y2="435.42" stroke="#2b2e35" stroke-width="1.15"/><line x1="999.56" y1="446.50" x2="1005.88" y2="442.85" stroke="#2b2e35" stroke-width="1.15"/><line x1="1001.30" y1="453.00" x2="1008.60" y2="453.00" stroke="#2b2e35" stroke-width="1.15"/><line x1="999.56" y1="459.50" x2="1005.88" y2="463.15" stroke="#2b2e35" stroke-width="1.15"/><line x1="994.80" y1="464.26" x2="998.45" y2="470.58" stroke="#2b2e35" stroke-width="1.15"/><circle cx="989.0999999999999" cy="454.0" r="14.85" fill="#353840" opacity="0.8"/><circle cx="988.3" cy="453" r="14.25" fill="url(#kg)" stroke="#b2bccb" stroke-width="0.7"/><circle cx="996.41" cy="448.87" r="3.3" fill="#474b55" stroke="#d5dce6" stroke-width="1.0"/><rect x="962.5" y="474.5" width="51.0" height="16.0" rx="3" fill="#363941"/><rect x="963.1" y="475.1" width="36.9" height="14.8" rx="2.5" fill="#3c4049"/><path d="M1000.0,475.1 H1010.4 Q1012.9,475.1 1012.9,477.6 V487.40000000000003 Q1012.9,489.90000000000003 1010.4,489.90000000000003 H1000.0 Z" fill="#686e7a"/><path d="M1000.5,489.90000000000003 V475.6 H1010.4 Q1012.4,475.6 1012.4,477.6 V487.40000000000003" fill="none" stroke="#7c828e" stroke-width="1"/><path d="M1002.75,481.8 L1009.55,481.8 L1006.15,478.0 Z" fill="#a0a8b5"/><path d="M1002.75,483.0 L1009.55,483.0 L1006.15,486.9 Z" fill="#a0a8b5"/><text x="981.2" y="485.9" font-size="11" text-anchor="middle" fill="#dbe3ee" font-weight="normal" >42.0</text><text x="1048.3" y="429.5" font-size="10.8" text-anchor="middle" fill="#c9d2de" font-weight="normal" >Effects</text><line x1="1041.80" y1="464.26" x2="1038.15" y2="470.58" stroke="#2b2e35" stroke-width="1.15"/><line x1="1037.04" y1="459.50" x2="1030.72" y2="463.15" stroke="#2b2e35" stroke-width="1.15"/><line x1="1035.30" y1="453.00" x2="1028.00" y2="453.00" stroke="#2b2e35" stroke-width="1.15"/><line x1="1037.04" y1="446.50" x2="1030.72" y2="442.85" stroke="#2b2e35" stroke-width="1.15"/><line x1="1041.80" y1="441.74" x2="1038.15" y2="435.42" stroke="#2b2e35" stroke-width="1.15"/><line x1="1048.30" y1="440.00" x2="1048.30" y2="432.70" stroke="#2b2e35" stroke-width="1.15"/><line x1="1054.80" y1="441.74" x2="1058.45" y2="435.42" stroke="#2b2e35" stroke-width="1.15"/><line x1="1059.56" y1="446.50" x2="1065.88" y2="442.85" stroke="#2b2e35" stroke-width="1.15"/><line x1="1061.30" y1="453.00" x2="1068.60" y2="453.00" stroke="#2b2e35" stroke-width="1.15"/><line x1="1059.56" y1="459.50" x2="1065.88" y2="463.15" stroke="#2b2e35" stroke-width="1.15"/><line x1="1054.80" y1="464.26" x2="1058.45" y2="470.58" stroke="#2b2e35" stroke-width="1.15"/><circle cx="1049.1" cy="454.0" r="14.85" fill="#353840" opacity="0.8"/><circle cx="1048.3" cy="453" r="14.25" fill="url(#kg)" stroke="#b2bccb" stroke-width="0.7"/><circle cx="1052.85" cy="460.88" r="3.3" fill="#474b55" stroke="#d5dce6" stroke-width="1.0"/><rect x="1022.5" y="474.5" width="51.0" height="16.0" rx="3" fill="#363941"/><rect x="1023.1" y="475.1" width="36.9" height="14.8" rx="2.5" fill="#3c4049"/><path d="M1060.0,475.1 H1070.4 Q1072.9,475.1 1072.9,477.6 V487.40000000000003 Q1072.9,489.90000000000003 1070.4,489.90000000000003 H1060.0 Z" fill="#686e7a"/><path d="M1060.5,489.90000000000003 V475.6 H1070.4 Q1072.4,475.6 1072.4,477.6 V487.40000000000003" fill="none" stroke="#7c828e" stroke-width="1"/><path d="M1062.75,481.8 L1069.5500000000002,481.8 L1066.15,478.0 Z" fill="#868c98"/><path d="M1062.75,483.0 L1069.5500000000002,483.0 L1066.15,486.9 Z" fill="#a0a8b5"/><text x="1041.2" y="485.9" font-size="11" text-anchor="middle" fill="#dbe3ee" font-weight="normal" >100.0</text><text x="1108.3" y="429.5" font-size="10.8" text-anchor="middle" fill="#c9d2de" font-weight="normal" >Volume</text><line x1="1101.80" y1="464.26" x2="1098.15" y2="470.58" stroke="#2b2e35" stroke-width="1.15"/><line x1="1097.04" y1="459.50" x2="1090.72" y2="463.15" stroke="#2b2e35" stroke-width="1.15"/><line x1="1095.30" y1="453.00" x2="1088.00" y2="453.00" stroke="#2b2e35" stroke-width="1.15"/><line x1="1097.04" y1="446.50" x2="1090.72" y2="442.85" stroke="#2b2e35" stroke-width="1.15"/><line x1="1101.80" y1="441.74" x2="1098.15" y2="435.42" stroke="#2b2e35" stroke-width="1.15"/><line x1="1108.30" y1="440.00" x2="1108.30" y2="432.70" stroke="#2b2e35" stroke-width="1.15"/><line x1="1114.80" y1="441.74" x2="1118.45" y2="435.42" stroke="#2b2e35" stroke-width="1.15"/><line x1="1119.56" y1="446.50" x2="1125.88" y2="442.85" stroke="#2b2e35" stroke-width="1.15"/><line x1="1121.30" y1="453.00" x2="1128.60" y2="453.00" stroke="#2b2e35" stroke-width="1.15"/><line x1="1119.56" y1="459.50" x2="1125.88" y2="463.15" stroke="#2b2e35" stroke-width="1.15"/><line x1="1114.80" y1="464.26" x2="1118.45" y2="470.58" stroke="#2b2e35" stroke-width="1.15"/><circle cx="1109.1" cy="454.0" r="14.85" fill="#353840" opacity="0.8"/><circle cx="1108.3" cy="453" r="14.25" fill="url(#kg)" stroke="#b2bccb" stroke-width="0.7"/><circle cx="1108.30" cy="443.90" r="3.3" fill="#474b55" stroke="#d5dce6" stroke-width="1.0"/><rect x="1082.5" y="474.5" width="51.0" height="16.0" rx="3" fill="#363941"/><rect x="1083.1" y="475.1" width="36.9" height="14.8" rx="2.5" fill="#3c4049"/><path d="M1120.0,475.1 H1130.4 Q1132.9,475.1 1132.9,477.6 V487.40000000000003 Q1132.9,489.90000000000003 1130.4,489.90000000000003 H1120.0 Z" fill="#686e7a"/><path d="M1120.5,489.90000000000003 V475.6 H1130.4 Q1132.4,475.6 1132.4,477.6 V487.40000000000003" fill="none" stroke="#7c828e" stroke-width="1"/><path d="M1122.75,481.8 L1129.5500000000002,481.8 L1126.15,478.0 Z" fill="#a0a8b5"/><path d="M1122.75,483.0 L1129.5500000000002,483.0 L1126.15,486.9 Z" fill="#a0a8b5"/><text x="1101.2" y="485.9" font-size="11" text-anchor="middle" fill="#dbe3ee" font-weight="normal" >50.0</text><circle cx="24.9" cy="524.9" r="5.5" fill="#3d4048" opacity="0.6"/><circle cx="24.9" cy="524.9" r="5" fill="url(#lon)"/><text x="35.5" y="530" font-size="13" text-anchor="start" fill="#c9d2de" font-weight="normal" >MIDI In</text><text x="1096.5" y="525.8" font-size="13" text-anchor="start" fill="#c9d2de" font-weight="normal" >MOD</text><rect x="1150" y="526" width="2" height="2" fill="#8c9098"/><rect x="1150" y="529" width="2" height="2" fill="#8c9098"/><rect x="1147" y="529" width="2" height="2" fill="#8c9098"/><rect x="1150" y="532" width="2" height="2" fill="#8c9098"/><rect x="1147" y="532" width="2" height="2" fill="#8c9098"/><rect x="1144" y="532" width="2" height="2" fill="#8c9098"/><rect x="1150" y="535" width="2" height="2" fill="#8c9098"/><rect x="1147" y="535" width="2" height="2" fill="#8c9098"/><rect x="1144" y="535" width="2" height="2" fill="#8c9098"/><rect x="1141" y="535" width="2" height="2" fill="#8c9098"/><rect x="329.4" y="514" width="759.6" height="22" fill="#2e3037"/><rect x="330.00" y="514" width="9.03" height="22" fill="#c4c4c4"/><rect x="340.13" y="514" width="9.03" height="22" fill="#c4c4c4"/><rect x="350.26" y="514" width="9.03" height="22" fill="#c4c4c4"/><rect x="360.38" y="514" width="9.03" height="22" fill="#c4c4c4"/><rect x="370.51" y="514" width="9.03" height="22" fill="#c4c4c4"/><rect x="380.64" y="514" width="9.03" height="22" fill="#c4c4c4"/><rect x="390.77" y="514" width="9.03" height="22" fill="#c4c4c4"/><rect x="400.90" y="514" width="9.03" height="22" fill="#c4c4c4"/><rect x="411.02" y="514" width="9.03" height="22" fill="#c4c4c4"/><rect x="421.15" y="514" width="9.03" height="22" fill="#c4c4c4"/><rect x="431.28" y="514" width="9.03" height="22" fill="#c4c4c4"/><rect x="441.41" y="514" width="9.03" height="22" fill="#c4c4c4"/><rect x="451.54" y="514" width="9.03" height="22" fill="#c4c4c4"/><rect x="461.66" y="514" width="9.03" height="22" fill="#c4c4c4"/><rect x="471.79" y="514" width="9.03" height="22" fill="#c4c4c4"/><rect x="481.92" y="514" width="9.03" height="22" fill="#c4c4c4"/><rect x="492.05" y="514" width="9.03" height="22" fill="#c4c4c4"/><rect x="502.18" y="514" width="9.03" height="22" fill="#c4c4c4"/><rect x="512.30" y="514" width="9.03" height="22" fill="#c4c4c4"/><rect x="522.43" y="514" width="9.03" height="22" fill="#c4c4c4"/><rect x="532.56" y="514" width="9.03" height="22" fill="#c4c4c4"/><rect x="542.69" y="514" width="9.03" height="22" fill="#c4c4c4"/><rect x="552.82" y="514" width="9.03" height="22" fill="#c4c4c4"/><rect x="562.94" y="514" width="9.03" height="22" fill="#c4c4c4"/><rect x="573.07" y="514" width="9.03" height="22" fill="#c4c4c4"/><rect x="583.20" y="514" width="9.03" height="22" fill="#c4c4c4"/><rect x="593.33" y="514" width="9.03" height="22" fill="#c4c4c4"/><rect x="603.46" y="514" width="9.03" height="22" fill="#c4c4c4"/><rect x="613.58" y="514" width="9.03" height="22" fill="#c4c4c4"/><rect x="623.71" y="514" width="9.03" height="22" fill="#c4c4c4"/><rect x="633.84" y="514" width="9.03" height="22" fill="#c4c4c4"/><rect x="643.97" y="514" width="9.03" height="22" fill="#c4c4c4"/><rect x="654.10" y="514" width="9.03" height="22" fill="#c4c4c4"/><rect x="664.22" y="514" width="9.03" height="22" fill="#c4c4c4"/><rect x="674.35" y="514" width="9.03" height="22" fill="#c4c4c4"/><rect x="684.48" y="514" width="9.03" height="22" fill="#c4c4c4"/><rect x="694.61" y="514" width="9.03" height="22" fill="#c4c4c4"/><rect x="704.74" y="514" width="9.03" height="22" fill="#c4c4c4"/><rect x="714.86" y="514" width="9.03" height="22" fill="#c4c4c4"/><rect x="724.99" y="514" width="9.03" height="22" fill="#c4c4c4"/><rect x="735.12" y="514" width="9.03" height="22" fill="#c4c4c4"/><rect x="745.25" y="514" width="9.03" height="22" fill="#c4c4c4"/><rect x="755.38" y="514" width="9.03" height="22" fill="#c4c4c4"/><rect x="765.50" y="514" width="9.03" height="22" fill="#c4c4c4"/><rect x="775.63" y="514" width="9.03" height="22" fill="#c4c4c4"/><rect x="785.76" y="514" width="9.03" height="22" fill="#c4c4c4"/><rect x="795.89" y="514" width="9.03" height="22" fill="#c4c4c4"/><rect x="806.02" y="514" width="9.03" height="22" fill="#c4c4c4"/><rect x="816.14" y="514" width="9.03" height="22" fill="#c4c4c4"/><rect x="826.27" y="514" width="9.03" height="22" fill="#c4c4c4"/><rect x="836.40" y="514" width="9.03" height="22" fill="#c4c4c4"/><rect x="846.53" y="514" width="9.03" height="22" fill="#c4c4c4"/><rect x="856.66" y="514" width="9.03" height="22" fill="#c4c4c4"/><rect x="866.78" y="514" width="9.03" height="22" fill="#c4c4c4"/><rect x="876.91" y="514" width="9.03" height="22" fill="#c4c4c4"/><rect x="887.04" y="514" width="9.03" height="22" fill="#c4c4c4"/><rect x="897.17" y="514" width="9.03" height="22" fill="#c4c4c4"/><rect x="907.30" y="514" width="9.03" height="22" fill="#c4c4c4"/><rect x="917.42" y="514" width="9.03" height="22" fill="#c4c4c4"/><rect x="927.55" y="514" width="9.03" height="22" fill="#c4c4c4"/><rect x="937.68" y="514" width="9.03" height="22" fill="#c4c4c4"/><rect x="947.81" y="514" width="9.03" height="22" fill="#c4c4c4"/><rect x="957.94" y="514" width="9.03" height="22" fill="#c4c4c4"/><rect x="968.06" y="514" width="9.03" height="22" fill="#c4c4c4"/><rect x="978.19" y="514" width="9.03" height="22" fill="#c4c4c4"/><rect x="988.32" y="514" width="9.03" height="22" fill="#c4c4c4"/><rect x="998.45" y="514" width="9.03" height="22" fill="#c4c4c4"/><rect x="1008.58" y="514" width="9.03" height="22" fill="#c4c4c4"/><rect x="1018.70" y="514" width="9.03" height="22" fill="#c4c4c4"/><rect x="1028.83" y="514" width="9.03" height="22" fill="#c4c4c4"/><rect x="1038.96" y="514" width="9.03" height="22" fill="#c4c4c4"/><rect x="1049.09" y="514" width="9.03" height="22" fill="#c4c4c4"/><rect x="1059.22" y="514" width="9.03" height="22" fill="#c4c4c4"/><rect x="1069.34" y="514" width="9.03" height="22" fill="#c4c4c4"/><rect x="1079.47" y="514" width="5.53" height="22" fill="#c4c4c4"/><rect x="329.4" y="514" width="2.4" height="22" fill="#7a7a7a"/><rect x="1085" y="514" width="4" height="22" fill="#737373"/><rect x="686.1" y="514" width="4.70" height="22" fill="#7b8696"/><rect x="706.3" y="514" width="4.50" height="22" fill="#7b8696"/><rect x="716.1" y="514" width="4.80" height="22" fill="#7b8696"/><rect x="737.2" y="514" width="4.60" height="22" fill="#7b8696"/><rect x="335.93" y="513.6" width="7.2" height="15.4" fill="#25262b"/><rect x="336.53" y="514" width="6.0" height="14.4" fill="url(#bk)"/><rect x="346.06" y="513.6" width="7.2" height="15.4" fill="#25262b"/><rect x="346.66" y="514" width="6.0" height="14.4" fill="url(#bk)"/><rect x="366.31" y="513.6" width="7.2" height="15.4" fill="#25262b"/><rect x="366.91" y="514" width="6.0" height="14.4" fill="url(#bk)"/><rect x="376.44" y="513.6" width="7.2" height="15.4" fill="#25262b"/><rect x="377.04" y="514" width="6.0" height="14.4" fill="url(#bk)"/><rect x="386.57" y="513.6" width="7.2" height="15.4" fill="#25262b"/><rect x="387.17" y="514" width="6.0" height="14.4" fill="url(#bk)"/><rect x="406.82" y="513.6" width="7.2" height="15.4" fill="#25262b"/><rect x="407.42" y="514" width="6.0" height="14.4" fill="url(#bk)"/><rect x="416.95" y="513.6" width="7.2" height="15.4" fill="#25262b"/><rect x="417.55" y="514" width="6.0" height="14.4" fill="url(#bk)"/><rect x="437.21" y="513.6" width="7.2" height="15.4" fill="#25262b"/><rect x="437.81" y="514" width="6.0" height="14.4" fill="url(#bk)"/><rect x="447.34" y="513.6" width="7.2" height="15.4" fill="#25262b"/><rect x="447.94" y="514" width="6.0" height="14.4" fill="url(#bk)"/><rect x="457.46" y="513.6" width="7.2" height="15.4" fill="#25262b"/><rect x="458.06" y="514" width="6.0" height="14.4" fill="url(#bk)"/><rect x="477.72" y="513.6" width="7.2" height="15.4" fill="#25262b"/><rect x="478.32" y="514" width="6.0" height="14.4" fill="url(#bk)"/><rect x="487.85" y="513.6" width="7.2" height="15.4" fill="#25262b"/><rect x="488.45" y="514" width="6.0" height="14.4" fill="url(#bk)"/><rect x="508.10" y="513.6" width="7.2" height="15.4" fill="#25262b"/><rect x="508.70" y="514" width="6.0" height="14.4" fill="url(#bk)"/><rect x="518.23" y="513.6" width="7.2" height="15.4" fill="#25262b"/><rect x="518.83" y="514" width="6.0" height="14.4" fill="url(#bk)"/><rect x="528.36" y="513.6" width="7.2" height="15.4" fill="#25262b"/><rect x="528.96" y="514" width="6.0" height="14.4" fill="url(#bk)"/><rect x="548.62" y="513.6" width="7.2" height="15.4" fill="#25262b"/><rect x="549.22" y="514" width="6.0" height="14.4" fill="url(#bk)"/><rect x="558.74" y="513.6" width="7.2" height="15.4" fill="#25262b"/><rect x="559.34" y="514" width="6.0" height="14.4" fill="url(#bk)"/><rect x="579.00" y="513.6" width="7.2" height="15.4" fill="#25262b"/><rect x="579.60" y="514" width="6.0" height="14.4" fill="url(#bk)"/><rect x="589.13" y="513.6" width="7.2" height="15.4" fill="#25262b"/><rect x="589.73" y="514" width="6.0" height="14.4" fill="url(#bk)"/><rect x="599.26" y="513.6" width="7.2" height="15.4" fill="#25262b"/><rect x="599.86" y="514" width="6.0" height="14.4" fill="url(#bk)"/><rect x="619.51" y="513.6" width="7.2" height="15.4" fill="#25262b"/><rect x="620.11" y="514" width="6.0" height="14.4" fill="url(#bk)"/><rect x="629.64" y="513.6" width="7.2" height="15.4" fill="#25262b"/><rect x="630.24" y="514" width="6.0" height="14.4" fill="url(#bk)"/><rect x="649.90" y="513.6" width="7.2" height="15.4" fill="#25262b"/><rect x="650.50" y="514" width="6.0" height="14.4" fill="url(#bk)"/><rect x="660.02" y="513.6" width="7.2" height="15.4" fill="#25262b"/><rect x="660.62" y="514" width="6.0" height="14.4" fill="url(#bk)"/><rect x="670.15" y="513.6" width="7.2" height="15.4" fill="#25262b"/><rect x="670.75" y="514" width="6.0" height="14.4" fill="url(#bk)"/><rect x="690.41" y="513.6" width="7.2" height="15.4" fill="#25262b"/><rect x="691.01" y="514" width="6.0" height="14.4" fill="url(#bk)"/><rect x="700.54" y="513.6" width="7.2" height="15.4" fill="#25262b"/><rect x="701.14" y="514" width="6.0" height="14.4" fill="url(#bk)"/><rect x="720.79" y="513.6" width="7.2" height="15.4" fill="#25262b"/><rect x="721.39" y="514" width="6.0" height="14.4" fill="url(#bk)"/><rect x="730.92" y="513.6" width="7.2" height="15.4" fill="#25262b"/><rect x="731.52" y="514" width="6.0" height="14.4" fill="url(#bk)"/><rect x="741.05" y="513.6" width="7.2" height="15.4" fill="#25262b"/><rect x="741.65" y="514" width="6.0" height="14.4" fill="url(#bk)"/><rect x="761.30" y="513.6" width="7.2" height="15.4" fill="#25262b"/><rect x="761.90" y="514" width="6.0" height="14.4" fill="url(#bk)"/><rect x="771.43" y="513.6" width="7.2" height="15.4" fill="#25262b"/><rect x="772.03" y="514" width="6.0" height="14.4" fill="url(#bk)"/><rect x="791.69" y="513.6" width="7.2" height="15.4" fill="#25262b"/><rect x="792.29" y="514" width="6.0" height="14.4" fill="url(#bk)"/><rect x="801.82" y="513.6" width="7.2" height="15.4" fill="#25262b"/><rect x="802.42" y="514" width="6.0" height="14.4" fill="url(#bk)"/><rect x="811.94" y="513.6" width="7.2" height="15.4" fill="#25262b"/><rect x="812.54" y="514" width="6.0" height="14.4" fill="url(#bk)"/><rect x="832.20" y="513.6" width="7.2" height="15.4" fill="#25262b"/><rect x="832.80" y="514" width="6.0" height="14.4" fill="url(#bk)"/><rect x="842.33" y="513.6" width="7.2" height="15.4" fill="#25262b"/><rect x="842.93" y="514" width="6.0" height="14.4" fill="url(#bk)"/><rect x="862.58" y="513.6" width="7.2" height="15.4" fill="#25262b"/><rect x="863.18" y="514" width="6.0" height="14.4" fill="url(#bk)"/><rect x="872.71" y="513.6" width="7.2" height="15.4" fill="#25262b"/><rect x="873.31" y="514" width="6.0" height="14.4" fill="url(#bk)"/><rect x="882.84" y="513.6" width="7.2" height="15.4" fill="#25262b"/><rect x="883.44" y="514" width="6.0" height="14.4" fill="url(#bk)"/><rect x="903.10" y="513.6" width="7.2" height="15.4" fill="#25262b"/><rect x="903.70" y="514" width="6.0" height="14.4" fill="url(#bk)"/><rect x="913.22" y="513.6" width="7.2" height="15.4" fill="#25262b"/><rect x="913.82" y="514" width="6.0" height="14.4" fill="url(#bk)"/><rect x="933.48" y="513.6" width="7.2" height="15.4" fill="#25262b"/><rect x="934.08" y="514" width="6.0" height="14.4" fill="url(#bk)"/><rect x="943.61" y="513.6" width="7.2" height="15.4" fill="#25262b"/><rect x="944.21" y="514" width="6.0" height="14.4" fill="url(#bk)"/><rect x="953.74" y="513.6" width="7.2" height="15.4" fill="#25262b"/><rect x="954.34" y="514" width="6.0" height="14.4" fill="url(#bk)"/><rect x="973.99" y="513.6" width="7.2" height="15.4" fill="#25262b"/><rect x="974.59" y="514" width="6.0" height="14.4" fill="url(#bk)"/><rect x="984.12" y="513.6" width="7.2" height="15.4" fill="#25262b"/><rect x="984.72" y="514" width="6.0" height="14.4" fill="url(#bk)"/><rect x="1004.38" y="513.6" width="7.2" height="15.4" fill="#25262b"/><rect x="1004.98" y="514" width="6.0" height="14.4" fill="url(#bk)"/><rect x="1014.50" y="513.6" width="7.2" height="15.4" fill="#25262b"/><rect x="1015.10" y="514" width="6.0" height="14.4" fill="url(#bk)"/><rect x="1024.63" y="513.6" width="7.2" height="15.4" fill="#25262b"/><rect x="1025.23" y="514" width="6.0" height="14.4" fill="url(#bk)"/><rect x="1044.89" y="513.6" width="7.2" height="15.4" fill="#25262b"/><rect x="1045.49" y="514" width="6.0" height="14.4" fill="url(#bk)"/><rect x="1055.02" y="513.6" width="7.2" height="15.4" fill="#25262b"/><rect x="1055.62" y="514" width="6.0" height="14.4" fill="url(#bk)"/><rect x="1075.27" y="513.6" width="7.2" height="15.4" fill="#25262b"/><rect x="1075.87" y="514" width="6.0" height="14.4" fill="url(#bk)"/></g></svg></body></html>
